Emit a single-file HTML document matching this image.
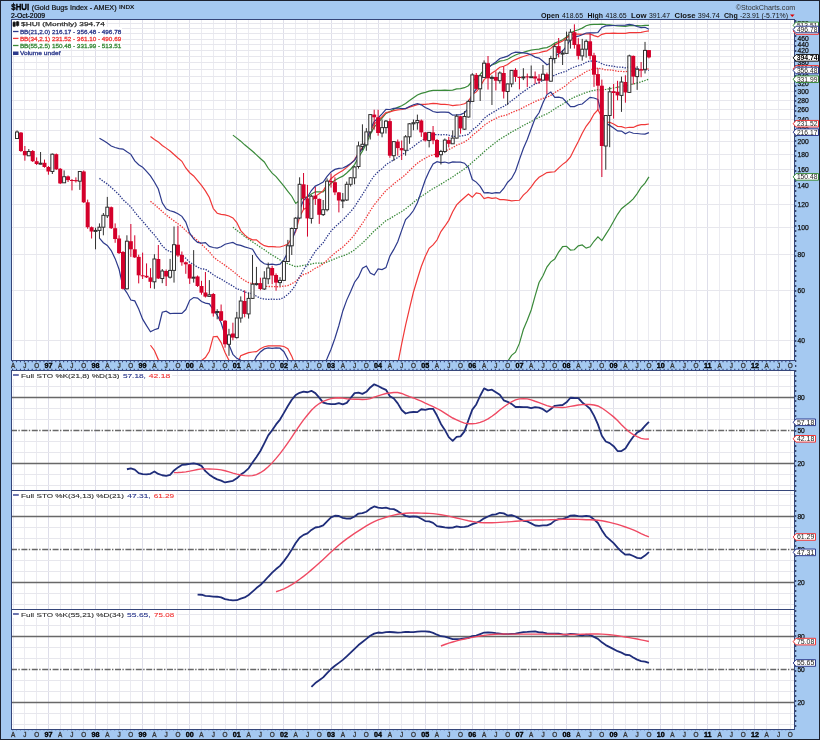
<!DOCTYPE html>
<html><head><meta charset="utf-8"><style>
html,body{margin:0;padding:0;}
body{width:820px;height:740px;position:relative;overflow:hidden;background:#a5c9f1;font-family:"Liberation Sans",sans-serif;}
</style></head><body>
<svg width="820" height="740" viewBox="0 0 820 740" style="position:absolute;left:0;top:0;will-change:transform" font-family='"Liberation Sans",sans-serif'>
<rect x="0" y="0" width="820" height="740" fill="#a5c9f1"/>
<rect x="11" y="19" width="784" height="341" fill="#fff"/>
<rect x="11" y="370" width="784" height="120" fill="#fff"/>
<rect x="11" y="490" width="784" height="119" fill="#fff"/>
<rect x="11" y="609" width="784" height="120" fill="#fff"/>
<path d="M13.5 19V360M13.5 370V490M13.5 490V609M13.5 609V729M24.5 19V360M24.5 370V490M24.5 490V609M24.5 609V729M36.5 19V360M36.5 370V490M36.5 490V609M36.5 609V729M60.5 19V360M60.5 370V490M60.5 490V609M60.5 609V729M71.5 19V360M71.5 370V490M71.5 490V609M71.5 609V729M83.5 19V360M83.5 370V490M83.5 490V609M83.5 609V729M107.5 19V360M107.5 370V490M107.5 490V609M107.5 609V729M119.5 19V360M119.5 370V490M119.5 490V609M119.5 609V729M130.5 19V360M130.5 370V490M130.5 490V609M130.5 609V729M154.5 19V360M154.5 370V490M154.5 490V609M154.5 609V729M166.5 19V360M166.5 370V490M166.5 490V609M166.5 609V729M177.5 19V360M177.5 370V490M177.5 490V609M177.5 609V729M201.5 19V360M201.5 370V490M201.5 490V609M201.5 609V729M213.5 19V360M213.5 370V490M213.5 490V609M213.5 609V729M225.5 19V360M225.5 370V490M225.5 490V609M225.5 609V729M248.5 19V360M248.5 370V490M248.5 490V609M248.5 609V729M260.5 19V360M260.5 370V490M260.5 490V609M260.5 609V729M272.5 19V360M272.5 370V490M272.5 490V609M272.5 609V729M295.5 19V360M295.5 370V490M295.5 490V609M295.5 609V729M307.5 19V360M307.5 370V490M307.5 490V609M307.5 609V729M319.5 19V360M319.5 370V490M319.5 490V609M319.5 609V729M342.5 19V360M342.5 370V490M342.5 490V609M342.5 609V729M354.5 19V360M354.5 370V490M354.5 490V609M354.5 609V729M366.5 19V360M366.5 370V490M366.5 490V609M366.5 609V729M389.5 19V360M389.5 370V490M389.5 490V609M389.5 609V729M401.5 19V360M401.5 370V490M401.5 490V609M401.5 609V729M413.5 19V360M413.5 370V490M413.5 490V609M413.5 609V729M437.5 19V360M437.5 370V490M437.5 490V609M437.5 609V729M448.5 19V360M448.5 370V490M448.5 490V609M448.5 609V729M460.5 19V360M460.5 370V490M460.5 490V609M460.5 609V729M484.5 19V360M484.5 370V490M484.5 490V609M484.5 609V729M495.5 19V360M495.5 370V490M495.5 490V609M495.5 609V729M507.5 19V360M507.5 370V490M507.5 490V609M507.5 609V729M531.5 19V360M531.5 370V490M531.5 490V609M531.5 609V729M542.5 19V360M542.5 370V490M542.5 490V609M542.5 609V729M554.5 19V360M554.5 370V490M554.5 490V609M554.5 609V729M578.5 19V360M578.5 370V490M578.5 490V609M578.5 609V729M590.5 19V360M590.5 370V490M590.5 490V609M590.5 609V729M601.5 19V360M601.5 370V490M601.5 490V609M601.5 609V729M625.5 19V360M625.5 370V490M625.5 490V609M625.5 609V729M637.5 19V360M637.5 370V490M637.5 490V609M637.5 609V729M648.5 19V360M648.5 370V490M648.5 490V609M648.5 609V729M672.5 19V360M672.5 370V490M672.5 490V609M672.5 609V729M684.5 19V360M684.5 370V490M684.5 490V609M684.5 609V729M696.5 19V360M696.5 370V490M696.5 490V609M696.5 609V729M719.5 19V360M719.5 370V490M719.5 490V609M719.5 609V729M731.5 19V360M731.5 370V490M731.5 490V609M731.5 609V729M743.5 19V360M743.5 370V490M743.5 490V609M743.5 609V729M766.5 19V360M766.5 370V490M766.5 490V609M766.5 609V729M778.5 19V360M778.5 370V490M778.5 490V609M778.5 609V729M790.5 19V360M790.5 370V490M790.5 490V609M790.5 609V729" stroke="#ebebf1" stroke-width="1" fill="none"/>
<path d="M48.5 19V360M48.5 370V490M48.5 490V609M48.5 609V729M95.5 19V360M95.5 370V490M95.5 490V609M95.5 609V729M142.5 19V360M142.5 370V490M142.5 490V609M142.5 609V729M189.5 19V360M189.5 370V490M189.5 490V609M189.5 609V729M236.5 19V360M236.5 370V490M236.5 490V609M236.5 609V729M283.5 19V360M283.5 370V490M283.5 490V609M283.5 609V729M331.5 19V360M331.5 370V490M331.5 490V609M331.5 609V729M378.5 19V360M378.5 370V490M378.5 490V609M378.5 609V729M425.5 19V360M425.5 370V490M425.5 490V609M425.5 609V729M472.5 19V360M472.5 370V490M472.5 490V609M472.5 609V729M519.5 19V360M519.5 370V490M519.5 490V609M519.5 609V729M566.5 19V360M566.5 370V490M566.5 490V609M566.5 609V729M613.5 19V360M613.5 370V490M613.5 490V609M613.5 609V729M660.5 19V360M660.5 370V490M660.5 490V609M660.5 609V729M707.5 19V360M707.5 370V490M707.5 490V609M707.5 609V729M754.5 19V360M754.5 370V490M754.5 490V609M754.5 609V729" stroke="#dedeea" stroke-width="1" fill="none"/>
<path d="M11 340.5H795M11 290.5H795M11 254.5H795M11 227.5H795M11 204.5H795M11 185.5H795M11 169.5H795M11 154.5H795M11 141.5H795M11 130.5H795M11 119.5H795M11 109.5H795M11 100.5H795M11 91.5H795M11 83.5H795M11 76.5H795M11 69.5H795M11 62.5H795M11 56.5H795M11 50.5H795M11 44.5H795M11 39.5H795M11 33.5H795M11 28.5H795M11 23.5H795M11 485.5H795M11 474.5H795M11 452.5H795M11 441.5H795M11 419.5H795M11 408.5H795M11 386.5H795M11 375.5H795M11 604.5H795M11 593.5H795M11 571.5H795M11 560.5H795M11 538.5H795M11 527.5H795M11 505.5H795M11 494.5H795M11 724.5H795M11 713.5H795M11 691.5H795M11 680.5H795M11 658.5H795M11 647.5H795M11 625.5H795M11 614.5H795" stroke="#e7e7ed" stroke-width="1" fill="none"/>
<path d="M11 397.5H795" stroke="#686868" stroke-width="1.5"/>
<path d="M11 463.5H795" stroke="#686868" stroke-width="1.5"/>
<path d="M11 430.5H795" stroke="#686868" stroke-width="1.4" stroke-dasharray="6 1.4 1.4 1.6"/>
<path d="M11 516.5H795" stroke="#686868" stroke-width="1.5"/>
<path d="M11 582.5H795" stroke="#686868" stroke-width="1.5"/>
<path d="M11 549.5H795" stroke="#686868" stroke-width="1.4" stroke-dasharray="6 1.4 1.4 1.6"/>
<path d="M11 636.5H795" stroke="#686868" stroke-width="1.5"/>
<path d="M11 702.5H795" stroke="#686868" stroke-width="1.5"/>
<path d="M11 669.5H795" stroke="#686868" stroke-width="1.4" stroke-dasharray="6 1.4 1.4 1.6"/>
<clipPath id="cm"><rect x="11" y="19" width="784" height="341"/></clipPath>
<g clip-path="url(#cm)">
<path d="M232.90 135.14 L236.82 138.14 L240.75 141.16 L244.67 144.82 L248.60 147.96 L252.52 151.20 L256.45 154.85 L260.38 158.44 L264.30 161.93 L268.23 168.27 L272.15 173.08 L276.07 176.61 L280.00 181.41 L283.93 186.22 L287.85 191.26 L291.78 196.21 L295.70 203.45 L299.62 200.49 L303.55 197.78 L307.48 196.96 L311.40 194.04 L315.32 191.78 L319.25 191.74 L323.18 191.96 L327.10 187.47 L331.03 183.21 L334.95 180.20 L338.88 177.99 L342.80 176.15 L346.73 172.93 L350.65 169.22 L354.57 164.57 L358.50 157.45 L362.43 151.10 L366.35 143.69 L370.28 134.36 L374.20 127.04 L378.12 122.66 L382.05 118.15 L385.98 113.39 L389.90 111.67 L393.82 109.23 L397.75 107.35 L401.68 105.72 L405.60 103.48 L409.52 100.49 L413.45 97.71 L417.38 95.04 L421.30 93.41 L425.23 92.31 L429.15 91.06 L433.07 90.32 L437.00 90.31 L440.93 90.42 L444.85 90.21 L448.77 90.31 L452.70 90.18 L456.62 88.87 L460.55 88.61 L464.48 87.70 L468.40 85.66 L472.32 80.80 L476.25 78.34 L480.18 74.62 L484.10 69.57 L488.02 67.09 L491.95 64.94 L495.88 63.38 L499.80 61.16 L503.73 60.48 L507.65 59.23 L511.57 56.94 L515.50 55.02 L519.42 53.52 L523.35 52.40 L527.27 51.16 L531.20 50.08 L535.12 49.52 L539.05 49.17 L542.98 48.12 L546.90 47.59 L550.83 45.79 L554.75 43.13 L558.67 41.51 L562.60 39.85 L566.52 36.95 L570.45 33.23 L574.38 31.02 L578.30 29.81 L582.23 28.11 L586.15 25.78 L590.08 24.64 L594.00 24.45 L597.92 24.45 L601.85 24.15 L605.77 24.65 L609.70 24.95 L613.62 25.40 L617.55 25.95 L621.48 26.17 L625.40 26.34 L629.33 25.58 L633.25 25.56 L637.17 25.61 L641.10 25.91 L645.02 25.29 L648.95 25.34" stroke="#3a8a3a" stroke-width="1.2" fill="none"/>
<path d="M232.90 795.59 L236.82 795.59 L240.75 795.59 L244.67 795.59 L248.60 795.59 L252.52 795.59 L256.45 795.59 L260.38 795.59 L264.30 795.59 L268.23 737.30 L272.15 612.38 L276.07 576.20 L280.00 530.78 L283.93 493.92 L287.85 461.91 L291.78 435.41 L295.70 403.15 L299.62 415.22 L303.55 425.87 L307.48 428.70 L311.40 441.53 L315.32 452.41 L319.25 452.59 L323.18 451.46 L327.10 479.00 L331.03 510.39 L334.95 532.46 L338.88 537.57 L342.80 552.86 L346.73 590.82 L350.65 656.39 L354.57 795.59 L358.50 795.59 L362.43 795.59 L366.35 795.59 L370.28 795.59 L374.20 795.59 L378.12 795.59 L382.05 795.59 L385.98 795.59 L389.90 795.59 L393.82 795.59 L397.75 795.59 L401.68 795.59 L405.60 795.59 L409.52 795.59 L413.45 795.59 L417.38 795.59 L421.30 795.59 L425.23 795.59 L429.15 795.59 L433.07 795.59 L437.00 795.59 L440.93 795.59 L444.85 795.59 L448.77 795.59 L452.70 795.59 L456.62 795.59 L460.55 564.52 L464.48 498.67 L468.40 472.32 L472.32 496.65 L476.25 473.17 L480.18 475.24 L484.10 509.73 L488.02 483.30 L491.95 453.13 L495.88 420.70 L499.80 403.63 L503.73 377.52 L507.65 361.47 L511.57 355.33 L515.50 352.14 L519.42 343.41 L523.35 329.54 L527.27 320.20 L531.20 309.97 L535.12 295.85 L539.05 282.51 L542.98 275.68 L546.90 267.11 L550.83 261.87 L554.75 259.08 L558.67 252.08 L562.60 246.65 L566.52 246.27 L570.45 250.02 L574.38 249.75 L578.30 245.92 L582.23 245.01 L586.15 248.19 L590.08 246.80 L594.00 241.27 L597.92 236.77 L601.85 240.63 L605.77 234.43 L609.70 228.24 L613.62 221.27 L617.55 214.31 L621.48 208.70 L625.40 205.43 L629.33 202.44 L633.25 198.83 L637.17 193.62 L641.10 187.29 L645.02 183.05 L648.95 176.93" stroke="#3a8a3a" stroke-width="1.2" fill="none"/>
<path d="M232.90 227.22 L236.82 230.35 L240.75 233.23 L244.67 236.46 L248.60 239.26 L252.52 241.86 L256.45 244.53 L260.38 247.20 L264.30 249.62 L268.23 252.59 L272.15 255.16 L276.07 257.40 L280.00 259.87 L283.93 261.96 L287.85 263.74 L291.78 265.15 L295.70 266.67 L299.62 266.07 L303.55 265.27 L307.48 264.94 L311.40 263.99 L315.32 263.22 L319.25 263.20 L323.18 263.28 L327.10 261.90 L331.03 260.33 L334.95 258.83 L338.88 257.00 L342.80 255.99 L346.73 254.36 L350.65 252.39 L354.57 249.80 L358.50 246.46 L362.43 243.11 L366.35 239.29 L370.28 235.11 L374.20 230.93 L378.12 227.63 L382.05 224.15 L385.98 220.57 L389.90 218.64 L393.82 216.14 L397.75 213.81 L401.68 211.57 L405.60 208.79 L409.52 205.65 L413.45 202.47 L417.38 199.23 L421.30 196.43 L425.23 193.93 L429.15 191.12 L433.07 188.61 L437.00 186.51 L440.93 184.17 L444.85 181.65 L448.77 179.26 L452.70 176.88 L456.62 174.07 L460.55 171.57 L464.48 168.89 L468.40 165.93 L472.32 162.16 L476.25 158.95 L480.18 155.45 L484.10 151.67 L488.02 148.47 L491.95 145.28 L495.88 142.28 L499.80 139.23 L503.73 136.90 L507.65 134.55 L511.57 131.94 L515.50 129.92 L519.42 127.81 L523.35 125.52 L527.27 123.49 L531.20 121.44 L535.12 119.34 L539.05 117.36 L542.98 115.53 L546.90 113.87 L550.83 111.57 L554.75 108.89 L558.67 106.46 L562.60 104.22 L566.52 101.71 L570.45 99.12 L574.38 97.19 L578.30 95.59 L582.23 94.01 L586.15 92.48 L590.08 91.30 L594.00 90.34 L597.92 89.67 L601.85 89.99 L605.77 89.48 L609.70 88.75 L613.62 87.97 L617.55 87.22 L621.48 86.38 L625.40 85.90 L629.33 84.71 L633.25 84.00 L637.17 82.99 L641.10 81.91 L645.02 80.51 L648.95 79.19" stroke="#3a8a3a" stroke-width="1.3" stroke-dasharray="1.4 1.3" fill="none"/>
<path d="M150.47 136.59 L154.40 139.45 L158.32 141.92 L162.25 145.42 L166.17 148.13 L170.10 151.00 L174.02 154.56 L177.95 158.02 L181.88 161.28 L185.80 167.97 L189.72 172.70 L193.65 175.97 L197.57 180.67 L201.50 185.46 L205.42 190.93 L209.35 197.48 L213.27 208.53 L217.20 213.23 L221.12 214.44 L225.05 214.83 L228.97 216.03 L232.90 217.91 L236.82 222.58 L240.75 230.54 L244.67 234.85 L248.60 238.14 L252.52 239.85 L256.45 239.77 L260.38 243.30 L264.30 245.67 L268.23 246.61 L272.15 246.62 L276.07 246.87 L280.00 246.99 L283.93 245.77 L287.85 244.12 L291.78 238.38 L295.70 231.62 L299.62 216.82 L303.55 209.49 L307.48 207.16 L311.40 201.27 L315.32 196.36 L319.25 193.77 L323.18 190.71 L327.10 184.19 L331.03 178.73 L334.95 175.20 L338.88 172.79 L342.80 170.58 L346.73 167.35 L350.65 163.83 L354.57 159.59 L358.50 153.08 L362.43 147.33 L366.35 140.47 L370.28 131.20 L374.20 124.08 L378.12 120.53 L382.05 116.73 L385.98 112.53 L389.90 111.84 L393.82 110.60 L397.75 109.94 L401.68 109.50 L405.60 108.60 L409.52 107.08 L413.45 105.90 L417.38 104.56 L421.30 104.27 L425.23 104.32 L429.15 103.87 L433.07 103.33 L437.00 103.60 L440.93 104.42 L444.85 104.40 L448.77 104.73 L452.70 105.65 L456.62 105.10 L460.55 104.78 L464.48 103.71 L468.40 101.44 L472.32 94.43 L476.25 91.89 L480.18 86.79 L484.10 79.66 L488.02 76.41 L491.95 73.08 L495.88 70.53 L499.80 67.23 L503.73 66.21 L507.65 64.57 L511.57 61.59 L515.50 59.58 L519.42 57.83 L523.35 56.54 L527.27 55.21 L531.20 54.15 L535.12 53.47 L539.05 52.79 L542.98 51.58 L546.90 50.88 L550.83 48.39 L554.75 44.85 L558.67 42.86 L562.60 40.98 L566.52 38.01 L570.45 34.93 L574.38 34.06 L578.30 34.18 L582.23 34.29 L586.15 33.76 L590.08 33.92 L594.00 35.67 L597.92 36.94 L601.85 34.31 L605.77 33.33 L609.70 33.28 L613.62 33.16 L617.55 33.34 L621.48 33.35 L625.40 33.29 L629.33 32.54 L633.25 32.59 L637.17 32.53 L641.10 32.42 L645.02 31.48 L648.95 30.94" stroke="#f03838" stroke-width="1.2" fill="none"/>
<path d="M150.47 345.25 L154.40 350.47 L158.32 359.59 L162.25 363.81 L166.17 371.07 L170.10 376.35 L174.02 374.31 L177.95 374.03 L181.88 375.01 L185.80 364.33 L189.72 362.28 L193.65 363.72 L197.57 362.03 L201.50 360.60 L205.42 357.49 L209.35 351.28 L213.27 336.70 L217.20 336.35 L221.12 342.57 L225.05 352.57 L228.97 360.32 L232.90 367.14 L236.82 365.79 L240.75 355.60 L244.67 354.15 L248.60 352.67 L252.52 352.01 L256.45 351.69 L260.38 348.80 L264.30 346.70 L268.23 345.82 L272.15 345.82 L276.07 345.91 L280.00 345.95 L283.93 346.51 L287.85 348.62 L291.78 356.14 L295.70 366.90 L299.62 401.66 L303.55 420.10 L307.48 426.05 L311.40 445.16 L315.32 460.83 L319.25 465.65 L323.18 469.05 L327.10 494.94 L331.03 513.46 L334.95 512.98 L338.88 501.63 L342.80 489.53 L346.73 477.57 L350.65 467.64 L354.57 459.34 L358.50 461.72 L362.43 458.72 L366.35 463.56 L370.28 501.85 L374.20 524.73 L378.12 489.40 L382.05 466.38 L385.98 452.35 L389.90 416.98 L393.82 388.26 L397.75 363.99 L401.68 343.96 L405.60 325.21 L409.52 308.40 L413.45 292.01 L417.38 278.98 L421.30 266.50 L425.23 256.47 L429.15 248.35 L433.07 244.93 L437.00 240.00 L440.93 231.59 L444.85 226.21 L448.77 220.36 L452.70 211.79 L456.62 204.90 L460.55 201.01 L464.48 197.45 L468.40 194.15 L472.32 197.30 L476.25 192.92 L480.18 193.74 L484.10 198.67 L488.02 197.45 L491.95 198.27 L495.88 197.78 L499.80 199.60 L503.73 199.66 L507.65 200.10 L511.57 200.89 L515.50 200.50 L519.42 200.25 L523.35 195.16 L527.27 191.66 L531.20 186.89 L535.12 181.29 L539.05 177.28 L542.98 175.11 L546.90 172.53 L550.83 172.05 L554.75 171.78 L558.67 167.83 L562.60 164.37 L566.52 161.51 L570.45 156.91 L574.38 149.10 L578.30 141.42 L582.23 133.22 L586.15 126.29 L590.08 121.10 L594.00 114.06 L597.92 109.73 L601.85 117.09 L605.77 121.98 L609.70 122.30 L613.62 123.93 L617.55 126.31 L621.48 126.60 L625.40 127.98 L629.33 127.24 L633.25 127.46 L637.17 125.68 L641.10 124.69 L645.02 124.71 L648.95 124.02" stroke="#f03838" stroke-width="1.2" fill="none"/>
<path d="M150.47 201.25 L154.40 204.47 L158.32 207.93 L162.25 211.54 L166.17 214.90 L170.10 218.11 L174.02 220.88 L177.95 223.79 L181.88 226.71 L185.80 230.63 L189.72 234.18 L193.65 237.13 L197.57 240.66 L201.50 244.26 L205.42 248.02 L209.35 251.83 L213.27 256.68 L217.20 260.03 L221.12 262.57 L225.05 265.40 L228.97 268.19 L232.90 271.22 L236.82 274.48 L240.75 277.86 L244.67 280.61 L248.60 282.57 L252.52 283.60 L256.45 283.45 L260.38 285.10 L264.30 286.12 L268.23 286.50 L272.15 286.50 L276.07 286.71 L280.00 286.80 L283.93 286.13 L287.85 285.62 L291.78 283.72 L295.70 281.59 L299.62 277.45 L303.55 274.45 L307.48 273.35 L311.40 270.79 L315.32 268.21 L319.25 266.37 L323.18 263.94 L327.10 260.16 L331.03 256.34 L334.95 252.99 L338.88 250.02 L342.80 247.14 L346.73 243.28 L350.65 239.26 L354.57 234.71 L358.50 228.89 L362.43 223.35 L366.35 217.32 L370.28 210.76 L374.20 204.91 L378.12 200.00 L382.05 195.21 L385.98 190.45 L389.90 187.38 L393.82 183.77 L397.75 180.65 L401.68 177.83 L405.60 174.46 L409.52 170.56 L413.45 166.76 L417.38 163.22 L421.30 160.45 L425.23 158.29 L429.15 156.07 L433.07 154.85 L437.00 153.84 L440.93 152.30 L444.85 150.85 L448.77 149.47 L452.70 147.64 L456.62 145.18 L460.55 143.74 L464.48 141.89 L468.40 139.29 L472.32 135.44 L476.25 132.34 L480.18 129.03 L484.10 125.34 L488.02 122.65 L491.95 120.43 L495.88 118.43 L499.80 116.46 L503.73 115.71 L507.65 114.60 L511.57 112.55 L515.50 110.93 L519.42 109.54 L523.35 107.33 L527.27 105.46 L531.20 103.47 L535.12 101.52 L539.05 99.96 L542.98 98.49 L546.90 97.29 L550.83 95.34 L554.75 92.67 L558.67 90.16 L562.60 87.86 L566.52 84.92 L570.45 81.42 L574.38 78.64 L578.30 76.50 L582.23 74.10 L586.15 71.55 L590.08 69.97 L594.00 68.74 L597.92 68.04 L601.85 68.89 L605.77 69.86 L609.70 69.93 L613.62 70.38 L617.55 71.27 L621.48 71.37 L625.40 71.77 L629.33 71.02 L633.25 71.12 L637.17 70.51 L641.10 70.12 L645.02 69.49 L648.95 68.91" stroke="#f03838" stroke-width="1.3" stroke-dasharray="1.4 1.3" fill="none"/>
<path d="M99.45 138.27 L103.37 140.60 L107.30 143.03 L111.22 145.96 L115.15 147.49 L119.07 148.65 L123.00 149.12 L126.92 151.86 L130.85 154.32 L134.78 160.92 L138.70 164.79 L142.62 167.12 L146.55 171.40 L150.47 175.94 L154.40 181.96 L158.32 189.00 L162.25 202.82 L166.17 208.75 L170.10 210.73 L174.02 211.86 L177.95 213.68 L181.88 216.31 L185.80 222.11 L189.72 233.14 L193.65 238.91 L197.57 242.34 L201.50 243.13 L205.42 242.65 L209.35 246.40 L213.27 247.49 L217.20 248.09 L221.12 246.77 L225.05 244.29 L228.97 243.26 L232.90 242.36 L236.82 244.70 L240.75 245.45 L244.67 246.90 L248.60 247.97 L252.52 249.17 L256.45 255.79 L260.38 260.85 L264.30 263.72 L268.23 264.54 L272.15 264.10 L276.07 264.80 L280.00 264.18 L283.93 259.83 L287.85 252.11 L291.78 241.03 L295.70 229.64 L299.62 209.62 L303.55 200.32 L307.48 196.98 L311.40 190.54 L315.32 186.11 L319.25 184.33 L323.18 182.13 L327.10 176.44 L331.03 171.87 L334.95 169.42 L338.88 168.39 L342.80 168.02 L346.73 166.11 L350.65 163.57 L354.57 160.38 L358.50 153.74 L362.43 148.69 L366.35 141.01 L370.28 129.54 L374.20 121.50 L378.12 118.02 L382.05 113.88 L385.98 109.37 L389.90 109.49 L393.82 108.36 L397.75 108.00 L401.68 108.64 L405.60 108.65 L409.52 106.50 L413.45 104.69 L417.38 103.57 L421.30 104.85 L425.23 107.45 L429.15 109.21 L433.07 111.47 L437.00 112.37 L440.93 112.14 L444.85 112.17 L448.77 112.42 L452.70 115.18 L456.62 114.94 L460.55 114.56 L464.48 112.87 L468.40 108.25 L472.32 94.54 L476.25 89.10 L480.18 81.55 L484.10 72.29 L488.02 68.24 L491.95 64.62 L495.88 61.91 L499.80 58.44 L503.73 57.43 L507.65 56.15 L511.57 53.43 L515.50 52.21 L519.42 52.37 L523.35 52.84 L527.27 53.33 L531.20 54.85 L535.12 57.10 L539.05 58.14 L542.98 61.26 L546.90 64.79 L550.83 63.14 L554.75 56.50 L558.67 53.63 L562.60 51.02 L566.52 46.16 L570.45 39.44 L574.38 36.95 L578.30 36.19 L582.23 34.74 L586.15 33.00 L590.08 32.91 L594.00 32.85 L597.92 32.49 L601.85 27.41 L605.77 25.91 L609.70 25.70 L613.62 25.49 L617.55 25.24 L621.48 25.24 L625.40 25.16 L629.33 24.35 L633.25 24.96 L637.17 26.53 L641.10 27.54 L645.02 27.27 L648.95 29.29" stroke="#2d3a8c" stroke-width="1.2" fill="none"/>
<path d="M99.45 238.19 L103.37 242.76 L107.30 245.48 L111.22 250.59 L115.15 258.64 L119.07 269.25 L123.00 286.96 L126.92 292.83 L130.85 300.09 L134.78 300.88 L138.70 308.99 L142.62 319.12 L146.55 325.68 L150.47 331.73 L154.40 329.72 L158.32 328.42 L162.25 312.25 L166.17 311.17 L170.10 313.54 L174.02 313.26 L177.95 313.38 L181.88 313.40 L185.80 309.55 L189.72 300.28 L193.65 297.52 L197.57 298.05 L201.50 301.51 L205.42 303.10 L209.35 303.91 L213.27 309.72 L217.20 315.23 L221.12 322.73 L225.05 335.28 L228.97 344.81 L232.90 354.35 L236.82 358.34 L240.75 360.20 L244.67 363.71 L248.60 364.85 L252.52 364.46 L256.45 356.69 L260.38 351.90 L264.30 348.92 L268.23 347.98 L272.15 348.34 L276.07 347.86 L280.00 348.18 L283.93 351.68 L287.85 359.33 L291.78 373.68 L295.70 387.06 L299.62 433.55 L303.55 443.55 L307.48 423.07 L311.40 414.75 L315.32 398.06 L319.25 380.05 L323.18 367.15 L327.10 358.55 L331.03 349.32 L334.95 338.29 L338.88 325.46 L342.80 310.95 L346.73 300.11 L350.65 291.58 L354.57 282.21 L358.50 276.88 L362.43 268.20 L366.35 266.02 L370.28 273.07 L374.20 275.00 L378.12 268.88 L382.05 269.57 L385.98 267.59 L389.90 256.12 L393.82 249.40 L397.75 241.77 L401.68 230.38 L405.60 219.65 L409.52 215.55 L413.45 210.53 L417.38 202.68 L421.30 191.54 L425.23 180.09 L429.15 171.32 L433.07 163.91 L437.00 161.61 L440.93 162.55 L444.85 162.04 L448.77 163.04 L452.70 161.95 L456.62 162.15 L460.55 162.14 L464.48 163.19 L468.40 167.47 L472.32 179.53 L476.25 182.11 L480.18 186.40 L484.10 192.90 L488.02 192.62 L491.95 193.33 L495.88 192.65 L499.80 192.90 L503.73 188.47 L507.65 182.25 L511.57 178.47 L515.50 171.30 L519.42 159.58 L523.35 148.56 L527.27 139.50 L531.20 128.75 L535.12 118.37 L539.05 112.81 L542.98 102.72 L546.90 94.59 L550.83 92.11 L554.75 97.37 L558.67 97.17 L562.60 98.11 L566.52 102.23 L570.45 106.71 L574.38 106.57 L578.30 104.72 L582.23 104.01 L586.15 100.59 L590.08 97.37 L594.00 97.97 L597.92 99.55 L601.85 115.39 L605.77 123.01 L609.70 125.38 L613.62 128.03 L617.55 130.87 L621.48 131.06 L625.40 133.84 L629.33 131.79 L633.25 133.26 L637.17 133.48 L641.10 133.99 L645.02 134.12 L648.95 132.65" stroke="#2d3a8c" stroke-width="1.2" fill="none"/>
<path d="M99.45 178.38 L103.37 181.40 L107.30 183.91 L111.22 187.50 L115.15 190.95 L119.07 194.77 L123.00 199.71 L126.92 203.22 L130.85 206.83 L134.78 212.04 L138.70 216.92 L142.62 221.06 L146.55 225.85 L150.47 230.73 L154.40 234.93 L158.32 239.99 L162.25 245.79 L166.17 249.62 L170.10 251.72 L174.02 252.43 L177.95 253.73 L181.88 255.54 L185.80 258.24 L189.72 262.20 L193.65 264.77 L197.57 267.08 L201.50 268.90 L205.42 269.21 L209.35 271.83 L213.27 274.72 L217.20 277.15 L221.12 279.00 L225.05 281.58 L228.97 283.87 L232.90 286.06 L236.82 288.88 L240.75 289.95 L244.67 291.97 L248.60 293.06 L252.52 293.81 L256.45 296.20 L260.38 298.16 L264.30 299.11 L268.23 299.34 L272.15 299.17 L276.07 299.47 L280.00 299.17 L283.93 297.40 L287.85 294.42 L291.78 290.32 L295.70 284.78 L299.62 276.53 L303.55 269.76 L307.48 264.19 L311.40 257.49 L315.32 251.28 L319.25 246.88 L323.18 242.80 L327.10 236.57 L331.03 231.12 L334.95 226.97 L338.88 223.46 L342.80 219.86 L346.73 215.75 L350.65 211.67 L354.57 206.83 L358.50 200.55 L362.43 194.51 L366.35 188.32 L370.28 181.52 L374.20 175.78 L378.12 171.70 L382.05 168.65 L385.98 164.69 L389.90 162.20 L393.82 159.74 L397.75 157.58 L401.68 155.07 L405.60 152.07 L409.52 149.35 L413.45 146.59 L417.38 143.43 L421.30 140.73 L425.23 138.50 L429.15 136.40 L433.07 134.92 L437.00 134.55 L440.93 134.79 L444.85 134.60 L448.77 135.15 L452.70 136.36 L456.62 136.30 L460.55 136.07 L464.48 135.48 L468.40 134.34 L472.32 129.86 L476.25 127.04 L480.18 123.16 L484.10 118.41 L488.02 115.38 L491.95 112.90 L495.88 110.72 L499.80 108.20 L503.73 106.32 L507.65 103.75 L511.57 100.75 L515.50 97.91 L519.42 94.68 L523.35 91.64 L527.27 89.04 L531.20 86.35 L535.12 83.97 L539.05 82.47 L542.98 80.26 L546.90 78.79 L550.83 76.78 L554.75 75.25 L558.67 73.49 L562.60 72.33 L566.52 71.03 L570.45 68.55 L574.38 66.92 L578.30 65.75 L582.23 64.58 L586.15 62.23 L590.08 60.98 L594.00 61.17 L597.92 61.52 L601.85 63.72 L605.77 65.15 L609.70 65.73 L613.62 66.40 L617.55 67.08 L621.48 67.14 L625.40 67.90 L629.33 66.73 L633.25 67.59 L637.17 68.77 L641.10 69.62 L645.02 69.47 L648.95 70.45" stroke="#2d3a8c" stroke-width="1.3" stroke-dasharray="1.4 1.3" fill="none"/>
<path d="M17.02 130.40V139.00" stroke="#303030" stroke-width="1"/>
<rect x="15.52" y="132.00" width="3" height="6.50" fill="#fff" stroke="#303030" stroke-width="1"/>
<path d="M20.95 132.00V152.00" stroke="#d4002b" stroke-width="1"/>
<rect x="18.95" y="132.60" width="4" height="18.40" fill="#d4002b"/>
<path d="M24.88 146.00V160.70" stroke="#d4002b" stroke-width="1"/>
<rect x="22.88" y="151.00" width="4" height="4.30" fill="#d4002b"/>
<path d="M28.80 149.00V156.00" stroke="#303030" stroke-width="1"/>
<rect x="27.30" y="151.50" width="3" height="4.30" fill="#fff" stroke="#303030" stroke-width="1"/>
<path d="M32.73 150.00V162.00" stroke="#d4002b" stroke-width="1"/>
<rect x="30.73" y="151.00" width="4" height="10.20" fill="#d4002b"/>
<path d="M36.65 157.40V165.00" stroke="#d4002b" stroke-width="1"/>
<rect x="34.65" y="161.20" width="4" height="2.80" fill="#d4002b"/>
<path d="M40.57 152.00V164.50" stroke="#303030" stroke-width="1"/>
<rect x="39.07" y="163.20" width="3" height="1.00" fill="#fff" stroke="#303030" stroke-width="1"/>
<path d="M44.50 159.60V167.70" stroke="#d4002b" stroke-width="1"/>
<rect x="42.50" y="162.80" width="4" height="4.20" fill="#d4002b"/>
<path d="M48.42 166.00V174.70" stroke="#d4002b" stroke-width="1"/>
<rect x="46.42" y="167.00" width="4" height="4.50" fill="#d4002b"/>
<path d="M52.35 153.50V174.00" stroke="#303030" stroke-width="1"/>
<rect x="50.85" y="154.20" width="3" height="17.30" fill="#fff" stroke="#303030" stroke-width="1"/>
<path d="M56.27 153.50V170.00" stroke="#d4002b" stroke-width="1"/>
<rect x="54.27" y="154.20" width="4" height="15.10" fill="#d4002b"/>
<path d="M60.20 168.00V184.00" stroke="#d4002b" stroke-width="1"/>
<rect x="58.20" y="168.80" width="4" height="14.60" fill="#d4002b"/>
<path d="M64.12 170.40V183.00" stroke="#303030" stroke-width="1"/>
<rect x="62.62" y="176.70" width="3" height="6.10" fill="#fff" stroke="#303030" stroke-width="1"/>
<path d="M68.05 175.50V182.00" stroke="#d4002b" stroke-width="1"/>
<rect x="66.05" y="176.40" width="4" height="3.70" fill="#d4002b"/>
<path d="M71.97 179.00V190.40" stroke="#d4002b" stroke-width="1"/>
<rect x="69.97" y="180.00" width="4" height="1.00" fill="#d4002b"/>
<path d="M75.90 177.40V182.50" stroke="#d4002b" stroke-width="1"/>
<rect x="73.90" y="180.10" width="4" height="1.10" fill="#d4002b"/>
<path d="M79.82 171.00V189.90" stroke="#303030" stroke-width="1"/>
<rect x="78.32" y="171.50" width="3" height="9.70" fill="#fff" stroke="#303030" stroke-width="1"/>
<path d="M83.75 170.50V203.00" stroke="#d4002b" stroke-width="1"/>
<rect x="81.75" y="171.50" width="4" height="30.80" fill="#d4002b"/>
<path d="M87.67 199.60V228.80" stroke="#d4002b" stroke-width="1"/>
<rect x="85.67" y="202.30" width="4" height="24.90" fill="#d4002b"/>
<path d="M91.60 226.50V238.50" stroke="#d4002b" stroke-width="1"/>
<rect x="89.60" y="227.20" width="4" height="4.30" fill="#d4002b"/>
<path d="M95.52 227.70V249.30" stroke="#303030" stroke-width="1"/>
<rect x="94.02" y="230.40" width="3" height="1.00" fill="#fff" stroke="#303030" stroke-width="1"/>
<path d="M99.45 223.40V238.50" stroke="#303030" stroke-width="1"/>
<rect x="97.95" y="227.20" width="3" height="3.20" fill="#fff" stroke="#303030" stroke-width="1"/>
<path d="M103.37 213.00V235.30" stroke="#303030" stroke-width="1"/>
<rect x="101.87" y="215.30" width="3" height="11.90" fill="#fff" stroke="#303030" stroke-width="1"/>
<path d="M107.30 196.90V218.00" stroke="#303030" stroke-width="1"/>
<rect x="105.80" y="207.20" width="3" height="8.60" fill="#fff" stroke="#303030" stroke-width="1"/>
<path d="M111.22 206.50V229.00" stroke="#d4002b" stroke-width="1"/>
<rect x="109.22" y="207.20" width="4" height="21.00" fill="#d4002b"/>
<path d="M115.15 223.40V242.80" stroke="#d4002b" stroke-width="1"/>
<rect x="113.15" y="228.20" width="4" height="10.80" fill="#d4002b"/>
<path d="M119.07 235.30V254.00" stroke="#d4002b" stroke-width="1"/>
<rect x="117.07" y="238.50" width="4" height="14.60" fill="#d4002b"/>
<path d="M123.00 251.00V289.50" stroke="#d4002b" stroke-width="1"/>
<rect x="121.00" y="252.00" width="4" height="36.80" fill="#d4002b"/>
<path d="M126.92 235.30V289.50" stroke="#303030" stroke-width="1"/>
<rect x="125.42" y="241.20" width="3" height="47.60" fill="#fff" stroke="#303030" stroke-width="1"/>
<path d="M130.85 224.00V256.90" stroke="#d4002b" stroke-width="1"/>
<rect x="128.85" y="241.20" width="4" height="8.10" fill="#d4002b"/>
<path d="M134.78 235.30V258.00" stroke="#d4002b" stroke-width="1"/>
<rect x="132.78" y="249.30" width="4" height="8.10" fill="#d4002b"/>
<path d="M138.70 254.70V283.40" stroke="#d4002b" stroke-width="1"/>
<rect x="136.70" y="256.90" width="4" height="18.40" fill="#d4002b"/>
<path d="M142.62 252.60V279.00" stroke="#d4002b" stroke-width="1"/>
<rect x="140.62" y="275.30" width="4" height="1.00" fill="#d4002b"/>
<path d="M146.55 263.40V278.00" stroke="#d4002b" stroke-width="1"/>
<rect x="144.55" y="275.80" width="4" height="1.60" fill="#d4002b"/>
<path d="M150.47 268.20V288.20" stroke="#d4002b" stroke-width="1"/>
<rect x="148.47" y="277.40" width="4" height="4.40" fill="#d4002b"/>
<path d="M154.40 254.20V288.80" stroke="#303030" stroke-width="1"/>
<rect x="152.90" y="259.00" width="3" height="22.80" fill="#fff" stroke="#303030" stroke-width="1"/>
<path d="M158.32 245.00V279.00" stroke="#d4002b" stroke-width="1"/>
<rect x="156.32" y="259.00" width="4" height="19.50" fill="#d4002b"/>
<path d="M162.25 269.00V283.20" stroke="#303030" stroke-width="1"/>
<rect x="160.75" y="271.00" width="3" height="7.50" fill="#fff" stroke="#303030" stroke-width="1"/>
<path d="M166.17 269.50V286.00" stroke="#d4002b" stroke-width="1"/>
<rect x="164.17" y="271.00" width="4" height="5.50" fill="#d4002b"/>
<path d="M170.10 258.90V278.50" stroke="#303030" stroke-width="1"/>
<rect x="168.60" y="270.40" width="3" height="6.80" fill="#fff" stroke="#303030" stroke-width="1"/>
<path d="M174.02 226.50V282.60" stroke="#303030" stroke-width="1"/>
<rect x="172.52" y="244.70" width="3" height="25.70" fill="#fff" stroke="#303030" stroke-width="1"/>
<path d="M177.95 225.80V256.90" stroke="#d4002b" stroke-width="1"/>
<rect x="175.95" y="244.70" width="4" height="10.80" fill="#d4002b"/>
<path d="M181.88 251.50V265.70" stroke="#d4002b" stroke-width="1"/>
<rect x="179.88" y="254.90" width="4" height="7.40" fill="#d4002b"/>
<path d="M185.80 261.50V273.80" stroke="#d4002b" stroke-width="1"/>
<rect x="183.80" y="262.30" width="4" height="2.00" fill="#d4002b"/>
<path d="M189.72 264.00V283.90" stroke="#d4002b" stroke-width="1"/>
<rect x="187.72" y="264.30" width="4" height="14.20" fill="#d4002b"/>
<path d="M193.65 250.10V282.60" stroke="#303030" stroke-width="1"/>
<rect x="192.15" y="277.20" width="3" height="1.00" fill="#fff" stroke="#303030" stroke-width="1"/>
<path d="M197.57 275.50V287.00" stroke="#d4002b" stroke-width="1"/>
<rect x="195.57" y="276.50" width="4" height="9.50" fill="#d4002b"/>
<path d="M201.50 280.80V294.70" stroke="#d4002b" stroke-width="1"/>
<rect x="199.50" y="286.00" width="4" height="6.70" fill="#d4002b"/>
<path d="M205.42 272.00V297.50" stroke="#d4002b" stroke-width="1"/>
<rect x="203.42" y="292.50" width="4" height="4.10" fill="#d4002b"/>
<path d="M209.35 280.10V297.00" stroke="#303030" stroke-width="1"/>
<rect x="207.85" y="294.80" width="3" height="1.60" fill="#fff" stroke="#303030" stroke-width="1"/>
<path d="M213.27 293.00V316.60" stroke="#d4002b" stroke-width="1"/>
<rect x="211.27" y="294.00" width="4" height="19.40" fill="#d4002b"/>
<path d="M217.20 309.20V319.30" stroke="#303030" stroke-width="1"/>
<rect x="215.70" y="311.50" width="3" height="1.00" fill="#fff" stroke="#303030" stroke-width="1"/>
<path d="M221.12 304.50V321.00" stroke="#d4002b" stroke-width="1"/>
<rect x="219.12" y="311.20" width="4" height="9.50" fill="#d4002b"/>
<path d="M225.05 320.00V347.70" stroke="#d4002b" stroke-width="1"/>
<rect x="223.05" y="320.70" width="4" height="23.60" fill="#d4002b"/>
<path d="M228.97 328.80V355.80" stroke="#303030" stroke-width="1"/>
<rect x="227.47" y="334.90" width="3" height="9.40" fill="#fff" stroke="#303030" stroke-width="1"/>
<path d="M232.90 322.70V340.30" stroke="#d4002b" stroke-width="1"/>
<rect x="230.90" y="333.50" width="4" height="4.10" fill="#d4002b"/>
<path d="M236.82 311.90V338.50" stroke="#303030" stroke-width="1"/>
<rect x="235.32" y="318.00" width="3" height="19.60" fill="#fff" stroke="#303030" stroke-width="1"/>
<path d="M240.75 296.40V322.70" stroke="#303030" stroke-width="1"/>
<rect x="239.25" y="301.00" width="3" height="17.00" fill="#fff" stroke="#303030" stroke-width="1"/>
<path d="M244.67 290.30V317.30" stroke="#d4002b" stroke-width="1"/>
<rect x="242.67" y="301.00" width="4" height="12.90" fill="#d4002b"/>
<path d="M248.60 292.70V318.60" stroke="#303030" stroke-width="1"/>
<rect x="247.10" y="298.40" width="3" height="15.50" fill="#fff" stroke="#303030" stroke-width="1"/>
<path d="M252.52 255.00V299.00" stroke="#303030" stroke-width="1"/>
<rect x="251.02" y="284.20" width="3" height="14.20" fill="#fff" stroke="#303030" stroke-width="1"/>
<path d="M256.45 266.90V285.50" stroke="#303030" stroke-width="1"/>
<rect x="254.95" y="283.60" width="3" height="1.00" fill="#fff" stroke="#303030" stroke-width="1"/>
<path d="M260.38 277.70V290.30" stroke="#d4002b" stroke-width="1"/>
<rect x="258.38" y="283.10" width="4" height="5.90" fill="#d4002b"/>
<path d="M264.30 271.20V290.00" stroke="#303030" stroke-width="1"/>
<rect x="262.80" y="278.20" width="3" height="10.80" fill="#fff" stroke="#303030" stroke-width="1"/>
<path d="M268.23 262.60V284.20" stroke="#303030" stroke-width="1"/>
<rect x="266.73" y="268.00" width="3" height="10.80" fill="#fff" stroke="#303030" stroke-width="1"/>
<path d="M272.15 265.80V284.20" stroke="#d4002b" stroke-width="1"/>
<rect x="270.15" y="268.00" width="4" height="7.50" fill="#d4002b"/>
<path d="M276.07 273.40V290.70" stroke="#d4002b" stroke-width="1"/>
<rect x="274.07" y="275.00" width="4" height="7.60" fill="#d4002b"/>
<path d="M280.00 277.20V286.40" stroke="#303030" stroke-width="1"/>
<rect x="278.50" y="280.40" width="3" height="2.20" fill="#fff" stroke="#303030" stroke-width="1"/>
<path d="M283.93 260.50V281.00" stroke="#303030" stroke-width="1"/>
<rect x="282.43" y="261.50" width="3" height="18.90" fill="#fff" stroke="#303030" stroke-width="1"/>
<path d="M287.85 239.90V262.00" stroke="#303030" stroke-width="1"/>
<rect x="286.35" y="245.80" width="3" height="15.70" fill="#fff" stroke="#303030" stroke-width="1"/>
<path d="M291.78 227.50V255.00" stroke="#303030" stroke-width="1"/>
<rect x="290.28" y="228.50" width="3" height="17.30" fill="#fff" stroke="#303030" stroke-width="1"/>
<path d="M295.70 217.00V229.00" stroke="#303030" stroke-width="1"/>
<rect x="294.20" y="218.20" width="3" height="10.30" fill="#fff" stroke="#303030" stroke-width="1"/>
<path d="M299.62 177.30V219.00" stroke="#303030" stroke-width="1"/>
<rect x="298.12" y="184.30" width="3" height="33.70" fill="#fff" stroke="#303030" stroke-width="1"/>
<path d="M303.55 173.00V209.20" stroke="#d4002b" stroke-width="1"/>
<rect x="301.55" y="184.30" width="4" height="14.10" fill="#d4002b"/>
<path d="M307.48 184.90V236.60" stroke="#d4002b" stroke-width="1"/>
<rect x="305.48" y="198.40" width="4" height="20.00" fill="#d4002b"/>
<path d="M311.40 195.00V223.60" stroke="#303030" stroke-width="1"/>
<rect x="309.90" y="196.20" width="3" height="22.20" fill="#fff" stroke="#303030" stroke-width="1"/>
<path d="M315.32 187.00V204.90" stroke="#d4002b" stroke-width="1"/>
<rect x="313.32" y="195.70" width="4" height="3.20" fill="#d4002b"/>
<path d="M319.25 198.50V223.90" stroke="#d4002b" stroke-width="1"/>
<rect x="317.25" y="198.90" width="4" height="15.90" fill="#d4002b"/>
<path d="M323.18 200.00V216.00" stroke="#303030" stroke-width="1"/>
<rect x="321.68" y="209.70" width="3" height="4.90" fill="#fff" stroke="#303030" stroke-width="1"/>
<path d="M327.10 178.40V211.40" stroke="#303030" stroke-width="1"/>
<rect x="325.60" y="181.10" width="3" height="28.60" fill="#fff" stroke="#303030" stroke-width="1"/>
<path d="M331.03 173.50V187.60" stroke="#d4002b" stroke-width="1"/>
<rect x="329.03" y="181.00" width="4" height="1.20" fill="#d4002b"/>
<path d="M334.95 177.30V195.10" stroke="#d4002b" stroke-width="1"/>
<rect x="332.95" y="182.20" width="4" height="10.20" fill="#d4002b"/>
<path d="M338.88 192.00V212.40" stroke="#d4002b" stroke-width="1"/>
<rect x="336.88" y="192.40" width="4" height="8.10" fill="#d4002b"/>
<path d="M342.80 193.00V208.10" stroke="#303030" stroke-width="1"/>
<rect x="341.30" y="200.00" width="3" height="1.00" fill="#fff" stroke="#303030" stroke-width="1"/>
<path d="M346.73 181.60V201.00" stroke="#303030" stroke-width="1"/>
<rect x="345.23" y="184.30" width="3" height="15.70" fill="#fff" stroke="#303030" stroke-width="1"/>
<path d="M350.65 177.00V186.50" stroke="#303030" stroke-width="1"/>
<rect x="349.15" y="177.80" width="3" height="6.50" fill="#fff" stroke="#303030" stroke-width="1"/>
<path d="M354.57 166.00V184.30" stroke="#303030" stroke-width="1"/>
<rect x="353.07" y="167.00" width="3" height="10.80" fill="#fff" stroke="#303030" stroke-width="1"/>
<path d="M358.50 141.60V168.60" stroke="#303030" stroke-width="1"/>
<rect x="357.00" y="145.90" width="3" height="20.60" fill="#fff" stroke="#303030" stroke-width="1"/>
<path d="M362.43 124.30V150.00" stroke="#303030" stroke-width="1"/>
<rect x="360.93" y="144.30" width="3" height="2.20" fill="#fff" stroke="#303030" stroke-width="1"/>
<path d="M366.35 128.10V150.80" stroke="#303030" stroke-width="1"/>
<rect x="364.85" y="131.90" width="3" height="13.00" fill="#fff" stroke="#303030" stroke-width="1"/>
<path d="M370.28 114.00V139.50" stroke="#303030" stroke-width="1"/>
<rect x="368.78" y="114.60" width="3" height="17.30" fill="#fff" stroke="#303030" stroke-width="1"/>
<path d="M374.20 109.70V129.70" stroke="#d4002b" stroke-width="1"/>
<rect x="372.20" y="114.60" width="4" height="2.70" fill="#d4002b"/>
<path d="M378.12 109.70V135.70" stroke="#d4002b" stroke-width="1"/>
<rect x="376.12" y="117.30" width="4" height="15.70" fill="#d4002b"/>
<path d="M382.05 119.50V137.30" stroke="#303030" stroke-width="1"/>
<rect x="380.55" y="127.60" width="3" height="5.40" fill="#fff" stroke="#303030" stroke-width="1"/>
<path d="M385.98 120.00V133.50" stroke="#303030" stroke-width="1"/>
<rect x="384.48" y="121.10" width="3" height="6.50" fill="#fff" stroke="#303030" stroke-width="1"/>
<path d="M389.90 118.40V157.80" stroke="#d4002b" stroke-width="1"/>
<rect x="387.90" y="121.10" width="4" height="34.60" fill="#d4002b"/>
<path d="M393.82 141.00V161.00" stroke="#303030" stroke-width="1"/>
<rect x="392.32" y="141.60" width="3" height="14.10" fill="#fff" stroke="#303030" stroke-width="1"/>
<path d="M397.75 139.50V155.70" stroke="#d4002b" stroke-width="1"/>
<rect x="395.75" y="141.60" width="4" height="6.50" fill="#d4002b"/>
<path d="M401.68 140.50V160.00" stroke="#d4002b" stroke-width="1"/>
<rect x="399.68" y="148.10" width="4" height="2.20" fill="#d4002b"/>
<path d="M405.60 135.10V155.70" stroke="#303030" stroke-width="1"/>
<rect x="404.10" y="136.80" width="3" height="13.50" fill="#fff" stroke="#303030" stroke-width="1"/>
<path d="M409.52 123.00V143.80" stroke="#303030" stroke-width="1"/>
<rect x="408.02" y="123.80" width="3" height="13.00" fill="#fff" stroke="#303030" stroke-width="1"/>
<path d="M413.45 119.50V130.30" stroke="#303030" stroke-width="1"/>
<rect x="411.95" y="122.70" width="3" height="1.10" fill="#fff" stroke="#303030" stroke-width="1"/>
<path d="M417.38 114.60V129.70" stroke="#303030" stroke-width="1"/>
<rect x="415.88" y="120.50" width="3" height="2.20" fill="#fff" stroke="#303030" stroke-width="1"/>
<path d="M421.30 119.50V136.90" stroke="#d4002b" stroke-width="1"/>
<rect x="419.30" y="120.50" width="4" height="11.90" fill="#d4002b"/>
<path d="M425.23 132.00V141.60" stroke="#d4002b" stroke-width="1"/>
<rect x="423.23" y="132.40" width="4" height="8.10" fill="#d4002b"/>
<path d="M429.15 132.00V147.40" stroke="#303030" stroke-width="1"/>
<rect x="427.65" y="132.40" width="3" height="8.10" fill="#fff" stroke="#303030" stroke-width="1"/>
<path d="M433.07 126.00V144.20" stroke="#d4002b" stroke-width="1"/>
<rect x="431.07" y="132.40" width="4" height="8.10" fill="#d4002b"/>
<path d="M437.00 139.00V157.60" stroke="#d4002b" stroke-width="1"/>
<rect x="435.00" y="140.00" width="4" height="17.20" fill="#d4002b"/>
<path d="M440.93 149.90V164.50" stroke="#303030" stroke-width="1"/>
<rect x="439.43" y="151.50" width="3" height="3.20" fill="#fff" stroke="#303030" stroke-width="1"/>
<path d="M444.85 138.50V153.10" stroke="#303030" stroke-width="1"/>
<rect x="443.35" y="140.10" width="3" height="11.40" fill="#fff" stroke="#303030" stroke-width="1"/>
<path d="M448.77 136.90V147.40" stroke="#d4002b" stroke-width="1"/>
<rect x="446.77" y="140.10" width="4" height="3.70" fill="#d4002b"/>
<path d="M452.70 130.40V144.00" stroke="#303030" stroke-width="1"/>
<rect x="451.20" y="138.10" width="3" height="5.70" fill="#fff" stroke="#303030" stroke-width="1"/>
<path d="M456.62 114.30V138.50" stroke="#303030" stroke-width="1"/>
<rect x="455.12" y="116.20" width="3" height="21.90" fill="#fff" stroke="#303030" stroke-width="1"/>
<path d="M460.55 116.00V133.70" stroke="#d4002b" stroke-width="1"/>
<rect x="458.55" y="116.20" width="4" height="12.20" fill="#d4002b"/>
<path d="M464.48 111.10V130.00" stroke="#303030" stroke-width="1"/>
<rect x="462.98" y="116.50" width="3" height="12.70" fill="#fff" stroke="#303030" stroke-width="1"/>
<path d="M468.40 99.70V117.50" stroke="#303030" stroke-width="1"/>
<rect x="466.90" y="101.40" width="3" height="15.60" fill="#fff" stroke="#303030" stroke-width="1"/>
<path d="M472.32 73.20V102.00" stroke="#303030" stroke-width="1"/>
<rect x="470.82" y="74.90" width="3" height="26.50" fill="#fff" stroke="#303030" stroke-width="1"/>
<path d="M476.25 73.00V89.50" stroke="#d4002b" stroke-width="1"/>
<rect x="474.25" y="74.90" width="4" height="14.00" fill="#d4002b"/>
<path d="M480.18 75.00V101.00" stroke="#303030" stroke-width="1"/>
<rect x="478.68" y="75.80" width="3" height="13.00" fill="#fff" stroke="#303030" stroke-width="1"/>
<path d="M484.10 60.40V78.00" stroke="#303030" stroke-width="1"/>
<rect x="482.60" y="63.20" width="3" height="14.20" fill="#fff" stroke="#303030" stroke-width="1"/>
<path d="M488.02 56.00V89.60" stroke="#d4002b" stroke-width="1"/>
<rect x="486.02" y="63.20" width="4" height="15.10" fill="#d4002b"/>
<path d="M491.95 75.40V105.00" stroke="#303030" stroke-width="1"/>
<rect x="490.45" y="77.40" width="3" height="1.00" fill="#fff" stroke="#303030" stroke-width="1"/>
<path d="M495.88 71.40V90.40" stroke="#d4002b" stroke-width="1"/>
<rect x="493.88" y="77.00" width="4" height="3.70" fill="#d4002b"/>
<path d="M499.80 71.40V83.50" stroke="#303030" stroke-width="1"/>
<rect x="498.30" y="73.00" width="3" height="7.70" fill="#fff" stroke="#303030" stroke-width="1"/>
<path d="M503.73 66.50V98.50" stroke="#d4002b" stroke-width="1"/>
<rect x="501.73" y="73.00" width="4" height="18.60" fill="#d4002b"/>
<path d="M507.65 83.50V105.00" stroke="#303030" stroke-width="1"/>
<rect x="506.15" y="83.90" width="3" height="7.60" fill="#fff" stroke="#303030" stroke-width="1"/>
<path d="M511.57 70.00V87.20" stroke="#303030" stroke-width="1"/>
<rect x="510.07" y="70.40" width="3" height="13.50" fill="#fff" stroke="#303030" stroke-width="1"/>
<path d="M515.50 68.20V81.80" stroke="#d4002b" stroke-width="1"/>
<rect x="513.50" y="69.90" width="4" height="7.00" fill="#d4002b"/>
<path d="M519.42 76.50V89.30" stroke="#d4002b" stroke-width="1"/>
<rect x="517.42" y="76.90" width="4" height="1.10" fill="#d4002b"/>
<path d="M523.35 68.20V80.10" stroke="#303030" stroke-width="1"/>
<rect x="521.85" y="76.90" width="3" height="1.00" fill="#fff" stroke="#303030" stroke-width="1"/>
<path d="M527.27 73.60V87.20" stroke="#d4002b" stroke-width="1"/>
<rect x="525.27" y="76.40" width="4" height="1.00" fill="#d4002b"/>
<path d="M531.20 65.50V77.50" stroke="#303030" stroke-width="1"/>
<rect x="529.70" y="76.70" width="3" height="1.00" fill="#fff" stroke="#303030" stroke-width="1"/>
<path d="M535.12 71.50V83.90" stroke="#d4002b" stroke-width="1"/>
<rect x="533.12" y="76.40" width="4" height="2.10" fill="#d4002b"/>
<path d="M539.05 74.20V83.90" stroke="#d4002b" stroke-width="1"/>
<rect x="537.05" y="78.50" width="4" height="2.20" fill="#d4002b"/>
<path d="M542.98 65.00V80.50" stroke="#303030" stroke-width="1"/>
<rect x="541.48" y="74.20" width="3" height="5.90" fill="#fff" stroke="#303030" stroke-width="1"/>
<path d="M546.90 72.60V94.20" stroke="#d4002b" stroke-width="1"/>
<rect x="544.90" y="74.20" width="4" height="6.50" fill="#d4002b"/>
<path d="M550.83 55.80V81.50" stroke="#303030" stroke-width="1"/>
<rect x="549.33" y="58.50" width="3" height="22.70" fill="#fff" stroke="#303030" stroke-width="1"/>
<path d="M554.75 43.90V63.40" stroke="#303030" stroke-width="1"/>
<rect x="553.25" y="46.60" width="3" height="11.90" fill="#fff" stroke="#303030" stroke-width="1"/>
<path d="M558.67 38.00V57.40" stroke="#d4002b" stroke-width="1"/>
<rect x="556.67" y="46.10" width="4" height="7.00" fill="#d4002b"/>
<path d="M562.60 49.90V65.00" stroke="#303030" stroke-width="1"/>
<rect x="561.10" y="53.10" width="3" height="1.00" fill="#fff" stroke="#303030" stroke-width="1"/>
<path d="M566.52 31.60V53.80" stroke="#303030" stroke-width="1"/>
<rect x="565.02" y="40.10" width="3" height="13.30" fill="#fff" stroke="#303030" stroke-width="1"/>
<path d="M570.45 29.10V48.60" stroke="#303030" stroke-width="1"/>
<rect x="568.95" y="32.20" width="3" height="7.90" fill="#fff" stroke="#303030" stroke-width="1"/>
<path d="M574.38 24.30V48.60" stroke="#d4002b" stroke-width="1"/>
<rect x="572.38" y="32.20" width="4" height="12.80" fill="#d4002b"/>
<path d="M578.30 38.20V59.50" stroke="#d4002b" stroke-width="1"/>
<rect x="576.30" y="44.30" width="4" height="11.60" fill="#d4002b"/>
<path d="M582.23 38.90V60.70" stroke="#303030" stroke-width="1"/>
<rect x="580.73" y="49.20" width="3" height="6.70" fill="#fff" stroke="#303030" stroke-width="1"/>
<path d="M586.15 39.50V57.70" stroke="#303030" stroke-width="1"/>
<rect x="584.65" y="41.30" width="3" height="7.90" fill="#fff" stroke="#303030" stroke-width="1"/>
<path d="M590.08 33.40V59.50" stroke="#d4002b" stroke-width="1"/>
<rect x="588.08" y="41.30" width="4" height="14.60" fill="#d4002b"/>
<path d="M594.00 52.80V86.90" stroke="#d4002b" stroke-width="1"/>
<rect x="592.00" y="55.30" width="4" height="19.40" fill="#d4002b"/>
<path d="M597.92 68.00V110.00" stroke="#d4002b" stroke-width="1"/>
<rect x="595.92" y="74.10" width="4" height="11.60" fill="#d4002b"/>
<path d="M601.85 79.60V177.00" stroke="#d4002b" stroke-width="1"/>
<rect x="599.85" y="85.70" width="4" height="60.30" fill="#d4002b"/>
<path d="M605.77 115.00V169.70" stroke="#303030" stroke-width="1"/>
<rect x="604.27" y="115.50" width="3" height="30.50" fill="#fff" stroke="#303030" stroke-width="1"/>
<path d="M609.70 86.90V147.20" stroke="#303030" stroke-width="1"/>
<rect x="608.20" y="91.80" width="3" height="23.70" fill="#fff" stroke="#303030" stroke-width="1"/>
<path d="M613.62 83.90V118.60" stroke="#d4002b" stroke-width="1"/>
<rect x="611.62" y="91.20" width="4" height="1.80" fill="#d4002b"/>
<path d="M617.55 80.80V100.30" stroke="#d4002b" stroke-width="1"/>
<rect x="615.55" y="91.80" width="4" height="3.60" fill="#d4002b"/>
<path d="M621.48 76.60V111.90" stroke="#303030" stroke-width="1"/>
<rect x="619.98" y="82.00" width="3" height="13.40" fill="#fff" stroke="#303030" stroke-width="1"/>
<path d="M625.40 75.30V102.70" stroke="#d4002b" stroke-width="1"/>
<rect x="623.40" y="82.00" width="4" height="10.40" fill="#d4002b"/>
<path d="M629.33 54.70V93.00" stroke="#303030" stroke-width="1"/>
<rect x="627.83" y="55.90" width="3" height="36.50" fill="#fff" stroke="#303030" stroke-width="1"/>
<path d="M633.25 55.50V84.50" stroke="#d4002b" stroke-width="1"/>
<rect x="631.25" y="55.90" width="4" height="20.70" fill="#d4002b"/>
<path d="M637.17 66.20V89.90" stroke="#303030" stroke-width="1"/>
<rect x="635.67" y="69.30" width="3" height="7.30" fill="#fff" stroke="#303030" stroke-width="1"/>
<path d="M641.10 62.00V77.20" stroke="#d4002b" stroke-width="1"/>
<rect x="639.10" y="69.30" width="4" height="1.00" fill="#d4002b"/>
<path d="M645.02 41.90V73.50" stroke="#303030" stroke-width="1"/>
<rect x="643.52" y="50.40" width="3" height="18.90" fill="#fff" stroke="#303030" stroke-width="1"/>
<path d="M648.95 50.10V58.40" stroke="#d4002b" stroke-width="1"/>
<rect x="646.95" y="50.10" width="4" height="7.30" fill="#d4002b"/>
</g>
<path d="M126.92 469.25 L130.85 468.31 L134.78 469.61 L138.70 473.07 L142.62 474.17 L146.55 474.29 L150.47 473.82 L154.40 471.49 L158.32 473.97 L162.25 475.24 L166.17 475.90 L170.10 474.84 L174.02 470.44 L177.95 467.41 L181.88 464.92 L185.80 464.51 L189.72 463.96 L193.65 463.30 L197.57 464.10 L201.50 465.87 L205.42 471.13 L209.35 474.66 L213.27 477.36 L217.20 479.35 L221.12 480.66 L225.05 482.47 L228.97 481.67 L232.90 480.79 L236.82 478.28 L240.75 474.54 L244.67 471.89 L248.60 468.32 L252.52 462.56 L256.45 456.94 L260.38 451.01 L264.30 443.29 L268.23 435.41 L272.15 430.22 L276.07 424.38 L280.00 419.58 L283.93 412.88 L287.85 406.04 L291.78 399.75 L295.70 395.08 L299.62 392.84 L303.55 391.71 L307.48 392.25 L311.40 390.84 L315.32 393.10 L319.25 397.67 L323.18 402.61 L327.10 403.67 L331.03 404.22 L334.95 404.17 L338.88 403.16 L342.80 404.38 L346.73 402.81 L350.65 398.04 L354.57 393.11 L358.50 392.53 L362.43 393.85 L366.35 391.81 L370.28 387.44 L374.20 384.33 L378.12 386.05 L382.05 388.09 L385.98 389.80 L389.90 396.21 L393.82 398.54 L397.75 403.41 L401.68 409.98 L405.60 413.50 L409.52 412.45 L413.45 411.99 L417.38 412.14 L421.30 409.26 L425.23 409.88 L429.15 408.78 L433.07 408.79 L437.00 415.57 L440.93 423.96 L444.85 429.90 L448.77 437.12 L452.70 440.80 L456.62 436.95 L460.55 436.41 L464.48 431.39 L468.40 420.28 L472.32 409.62 L476.25 404.42 L480.18 395.75 L484.10 388.41 L488.02 390.33 L491.95 389.63 L495.88 392.22 L499.80 394.78 L503.73 400.32 L507.65 401.90 L511.57 403.90 L515.50 407.02 L519.42 406.97 L523.35 407.16 L527.27 407.08 L531.20 408.22 L535.12 407.03 L539.05 407.61 L542.98 409.20 L546.90 411.89 L550.83 408.96 L554.75 405.79 L558.67 405.39 L562.60 405.00 L566.52 402.34 L570.45 397.75 L574.38 397.99 L578.30 398.11 L582.23 402.43 L586.15 405.36 L590.08 408.76 L594.00 415.64 L597.92 424.37 L601.85 435.77 L605.77 441.47 L609.70 443.16 L613.62 446.19 L617.55 450.99 L621.48 451.04 L625.40 448.59 L629.33 442.20 L633.25 436.75 L637.17 432.55 L641.10 430.38 L645.02 425.81 L648.95 421.88" stroke="#1f2d7a" stroke-width="1.8" fill="none" stroke-linejoin="round"/>
<path d="M174.02 472.65 L177.95 472.50 L181.88 472.24 L185.80 471.85 L189.72 471.15 L193.65 470.31 L197.57 469.53 L201.50 468.92 L205.42 468.89 L209.35 468.94 L213.27 469.11 L217.20 469.37 L221.12 469.82 L225.05 470.75 L228.97 471.84 L232.90 473.06 L236.82 474.12 L240.75 474.94 L244.67 475.60 L248.60 475.92 L252.52 475.67 L256.45 474.58 L260.38 472.76 L264.30 470.14 L268.23 466.76 L272.15 462.88 L276.07 458.41 L280.00 453.63 L283.93 448.41 L287.85 442.85 L291.78 437.10 L295.70 431.19 L299.62 425.38 L303.55 419.93 L307.48 414.96 L311.40 410.33 L315.32 406.47 L319.25 403.56 L323.18 401.44 L327.10 399.85 L331.03 398.67 L334.95 398.00 L338.88 397.77 L342.80 398.13 L346.73 398.72 L350.65 399.12 L354.57 399.23 L358.50 399.25 L362.43 399.48 L366.35 399.39 L370.28 398.60 L374.20 397.19 L378.12 395.84 L382.05 394.60 L385.98 393.49 L389.90 392.96 L393.82 392.51 L397.75 392.55 L401.68 393.47 L405.60 395.04 L409.52 396.57 L413.45 397.97 L417.38 399.53 L421.30 401.21 L425.23 403.18 L429.15 404.93 L433.07 406.52 L437.00 408.50 L440.93 410.64 L444.85 413.05 L448.77 415.64 L452.70 418.01 L456.62 419.82 L460.55 421.66 L464.48 423.15 L468.40 423.78 L472.32 423.80 L476.25 423.38 L480.18 422.38 L484.10 420.81 L488.02 418.87 L491.95 416.23 L495.88 413.33 L499.80 410.08 L503.73 406.96 L507.65 404.27 L511.57 401.77 L515.50 399.89 L519.42 398.87 L523.35 398.68 L527.27 398.88 L531.20 399.84 L535.12 401.27 L539.05 402.60 L542.98 404.11 L546.90 405.62 L550.83 406.71 L554.75 407.13 L558.67 407.40 L562.60 407.49 L566.52 407.13 L570.45 406.42 L574.38 405.71 L578.30 405.02 L582.23 404.58 L586.15 404.45 L590.08 404.54 L594.00 405.03 L597.92 405.99 L601.85 408.05 L605.77 410.80 L609.70 413.70 L613.62 416.87 L617.55 420.61 L621.48 424.71 L625.40 428.61 L629.33 432.00 L633.25 434.64 L637.17 436.73 L641.10 438.39 L645.02 439.17 L648.95 438.98" stroke="#ef4a63" stroke-width="1.4" fill="none"/>
<path d="M197.57 594.60 L201.50 594.73 L205.42 595.78 L209.35 596.04 L213.27 596.60 L217.20 596.73 L221.12 597.41 L225.05 599.16 L228.97 599.90 L232.90 600.42 L236.82 600.22 L240.75 598.68 L244.67 597.45 L248.60 594.97 L252.52 591.57 L256.45 588.08 L260.38 585.00 L264.30 581.13 L268.23 576.76 L272.15 572.62 L276.07 569.05 L280.00 565.83 L283.93 561.14 L287.85 555.78 L291.78 549.61 L295.70 543.05 L299.62 537.82 L303.55 534.88 L307.48 533.31 L311.40 529.91 L315.32 527.49 L319.25 526.87 L323.18 525.38 L327.10 521.28 L331.03 517.43 L334.95 515.75 L338.88 516.00 L342.80 517.87 L346.73 518.71 L350.65 518.51 L354.57 516.56 L358.50 513.54 L362.43 513.20 L366.35 511.74 L370.28 508.64 L374.20 506.45 L378.12 507.53 L382.05 508.20 L385.98 507.58 L389.90 508.82 L393.82 509.17 L397.75 511.15 L401.68 513.82 L405.60 515.90 L409.52 516.75 L413.45 516.34 L417.38 516.73 L421.30 518.73 L425.23 521.02 L429.15 521.45 L433.07 522.91 L437.00 526.14 L440.93 526.75 L444.85 527.30 L448.77 527.75 L452.70 527.68 L456.62 526.28 L460.55 527.18 L464.48 526.86 L468.40 526.05 L472.32 524.17 L476.25 522.85 L480.18 520.95 L484.10 518.34 L488.02 516.47 L491.95 514.74 L495.88 514.31 L499.80 512.78 L503.73 513.40 L507.65 515.56 L511.57 515.04 L515.50 516.49 L519.42 518.66 L523.35 520.74 L527.27 521.46 L531.20 523.38 L535.12 525.49 L539.05 525.78 L542.98 525.46 L546.90 525.46 L550.83 523.91 L554.75 520.58 L558.67 519.17 L562.60 519.10 L566.52 517.70 L570.45 515.65 L574.38 515.41 L578.30 516.14 L582.23 516.39 L586.15 515.79 L590.08 516.41 L594.00 519.36 L597.92 522.99 L601.85 530.16 L605.77 536.09 L609.70 539.59 L613.62 543.16 L617.55 547.53 L621.48 551.66 L625.40 554.70 L629.33 554.37 L633.25 555.99 L637.17 557.83 L641.10 558.27 L645.02 555.61 L648.95 552.16" stroke="#1f2d7a" stroke-width="1.8" fill="none" stroke-linejoin="round"/>
<path d="M276.07 591.76 L280.00 590.39 L283.93 588.79 L287.85 586.88 L291.78 584.67 L295.70 582.12 L299.62 579.31 L303.55 576.34 L307.48 573.20 L311.40 569.87 L315.32 566.40 L319.25 562.90 L323.18 559.41 L327.10 555.79 L331.03 552.09 L334.95 548.48 L338.88 545.05 L342.80 541.85 L346.73 538.88 L350.65 536.11 L354.57 533.44 L358.50 530.80 L362.43 528.29 L366.35 525.94 L370.28 523.69 L374.20 521.64 L378.12 519.95 L382.05 518.54 L385.98 517.24 L389.90 516.07 L393.82 515.08 L397.75 514.30 L401.68 513.68 L405.60 513.23 L409.52 513.02 L413.45 512.96 L417.38 513.01 L421.30 513.14 L425.23 513.29 L429.15 513.42 L433.07 513.63 L437.00 514.09 L440.93 514.72 L444.85 515.39 L448.77 516.15 L452.70 517.06 L456.62 518.00 L460.55 518.94 L464.48 519.82 L468.40 520.70 L472.32 521.44 L476.25 522.09 L480.18 522.55 L484.10 522.77 L488.02 522.80 L491.95 522.70 L495.88 522.60 L499.80 522.42 L503.73 522.16 L507.65 521.90 L511.57 521.60 L515.50 521.29 L519.42 520.93 L523.35 520.65 L527.27 520.37 L531.20 520.16 L535.12 520.06 L539.05 520.03 L542.98 519.95 L546.90 519.88 L550.83 519.78 L554.75 519.61 L558.67 519.44 L562.60 519.35 L566.52 519.32 L570.45 519.28 L574.38 519.31 L578.30 519.40 L582.23 519.57 L586.15 519.68 L590.08 519.72 L594.00 519.93 L597.92 520.24 L601.85 520.79 L605.77 521.52 L609.70 522.38 L613.62 523.32 L617.55 524.37 L621.48 525.61 L625.40 527.00 L629.33 528.37 L633.25 529.90 L637.17 531.68 L641.10 533.54 L645.02 535.28 L648.95 536.92" stroke="#ef4a63" stroke-width="1.4" fill="none"/>
<path d="M311.40 686.86 L315.32 683.07 L319.25 680.20 L323.18 677.38 L327.10 673.06 L331.03 669.05 L334.95 665.77 L338.88 662.89 L342.80 659.89 L346.73 656.35 L350.65 652.68 L354.57 648.84 L358.50 645.03 L362.43 641.98 L366.35 638.84 L370.28 635.79 L374.20 633.62 L378.12 632.51 L382.05 632.95 L385.98 632.22 L389.90 632.02 L393.82 632.24 L397.75 632.58 L401.68 632.33 L405.60 631.78 L409.52 632.01 L413.45 632.13 L417.38 631.65 L421.30 631.31 L425.23 631.32 L429.15 631.74 L433.07 632.83 L437.00 634.71 L440.93 636.23 L444.85 636.66 L448.77 637.79 L452.70 639.07 L456.62 639.04 L460.55 638.90 L464.48 638.44 L468.40 637.99 L472.32 636.19 L476.25 635.58 L480.18 634.10 L484.10 632.53 L488.02 632.36 L491.95 632.69 L495.88 633.22 L499.80 633.54 L503.73 634.16 L507.65 634.20 L511.57 633.93 L515.50 633.65 L519.42 632.83 L523.35 632.18 L527.27 631.95 L531.20 631.54 L535.12 631.43 L539.05 632.43 L542.98 632.52 L546.90 633.49 L550.83 633.56 L554.75 633.62 L558.67 633.68 L562.60 634.40 L566.52 634.75 L570.45 633.93 L574.38 634.13 L578.30 634.74 L582.23 635.32 L586.15 634.68 L590.08 635.04 L594.00 636.88 L597.92 638.84 L601.85 642.35 L605.77 645.11 L609.70 647.10 L613.62 649.16 L617.55 651.19 L621.48 652.62 L625.40 654.75 L629.33 655.10 L633.25 657.49 L637.17 659.59 L641.10 661.05 L645.02 661.59 L648.95 662.84" stroke="#1f2d7a" stroke-width="1.8" fill="none" stroke-linejoin="round"/>
<path d="M440.93 646.00 L444.85 644.52 L448.77 643.19 L452.70 641.98 L456.62 640.85 L460.55 639.85 L464.48 638.95 L468.40 638.13 L472.32 637.34 L476.25 636.63 L480.18 635.97 L484.10 635.38 L488.02 634.90 L491.95 634.53 L495.88 634.28 L499.80 634.12 L503.73 634.07 L507.65 634.09 L511.57 634.13 L515.50 634.15 L519.42 634.17 L523.35 634.17 L527.27 634.17 L531.20 634.13 L535.12 634.11 L539.05 634.13 L542.98 634.14 L546.90 634.18 L550.83 634.24 L554.75 634.31 L558.67 634.38 L562.60 634.45 L566.52 634.51 L570.45 634.49 L574.38 634.43 L578.30 634.37 L582.23 634.30 L586.15 634.17 L590.08 634.05 L594.00 633.99 L597.92 634.00 L601.85 634.13 L605.77 634.39 L609.70 634.73 L613.62 635.17 L617.55 635.72 L621.48 636.32 L625.40 636.97 L629.33 637.61 L633.25 638.32 L637.17 639.06 L641.10 639.85 L645.02 640.67 L648.95 641.53" stroke="#ef4a63" stroke-width="1.4" fill="none"/>
<rect x="11.5" y="19.5" width="783" height="341" fill="none" stroke="#36467a" stroke-width="1"/>
<rect x="11.5" y="370.5" width="783" height="120" fill="none" stroke="#36467a" stroke-width="1"/>
<rect x="11.5" y="490.5" width="783" height="119" fill="none" stroke="#36467a" stroke-width="1"/>
<rect x="11.5" y="609.5" width="783" height="120" fill="none" stroke="#36467a" stroke-width="1"/>
<path d="M12.60 361V362.2M12.60 368.8V370M12.60 729V730.2M16.52 361V362.2M16.52 368.8V370M16.52 729V730.2M20.45 361V362.2M20.45 368.8V370M20.45 729V730.2M24.38 361V362.2M24.38 368.8V370M24.38 729V730.2M28.30 361V362.2M28.30 368.8V370M28.30 729V730.2M32.23 361V362.2M32.23 368.8V370M32.23 729V730.2M36.15 361V362.2M36.15 368.8V370M36.15 729V730.2M40.07 361V362.2M40.07 368.8V370M40.07 729V730.2M44.00 361V362.2M44.00 368.8V370M44.00 729V730.2M47.92 361V362.2M47.92 368.8V370M47.92 729V730.2M51.85 361V362.2M51.85 368.8V370M51.85 729V730.2M55.77 361V362.2M55.77 368.8V370M55.77 729V730.2M59.70 361V362.2M59.70 368.8V370M59.70 729V730.2M63.62 361V362.2M63.62 368.8V370M63.62 729V730.2M67.55 361V362.2M67.55 368.8V370M67.55 729V730.2M71.47 361V362.2M71.47 368.8V370M71.47 729V730.2M75.40 361V362.2M75.40 368.8V370M75.40 729V730.2M79.32 361V362.2M79.32 368.8V370M79.32 729V730.2M83.25 361V362.2M83.25 368.8V370M83.25 729V730.2M87.17 361V362.2M87.17 368.8V370M87.17 729V730.2M91.10 361V362.2M91.10 368.8V370M91.10 729V730.2M95.02 361V362.2M95.02 368.8V370M95.02 729V730.2M98.95 361V362.2M98.95 368.8V370M98.95 729V730.2M102.87 361V362.2M102.87 368.8V370M102.87 729V730.2M106.80 361V362.2M106.80 368.8V370M106.80 729V730.2M110.72 361V362.2M110.72 368.8V370M110.72 729V730.2M114.65 361V362.2M114.65 368.8V370M114.65 729V730.2M118.57 361V362.2M118.57 368.8V370M118.57 729V730.2M122.50 361V362.2M122.50 368.8V370M122.50 729V730.2M126.42 361V362.2M126.42 368.8V370M126.42 729V730.2M130.35 361V362.2M130.35 368.8V370M130.35 729V730.2M134.28 361V362.2M134.28 368.8V370M134.28 729V730.2M138.20 361V362.2M138.20 368.8V370M138.20 729V730.2M142.12 361V362.2M142.12 368.8V370M142.12 729V730.2M146.05 361V362.2M146.05 368.8V370M146.05 729V730.2M149.97 361V362.2M149.97 368.8V370M149.97 729V730.2M153.90 361V362.2M153.90 368.8V370M153.90 729V730.2M157.82 361V362.2M157.82 368.8V370M157.82 729V730.2M161.75 361V362.2M161.75 368.8V370M161.75 729V730.2M165.67 361V362.2M165.67 368.8V370M165.67 729V730.2M169.60 361V362.2M169.60 368.8V370M169.60 729V730.2M173.52 361V362.2M173.52 368.8V370M173.52 729V730.2M177.45 361V362.2M177.45 368.8V370M177.45 729V730.2M181.38 361V362.2M181.38 368.8V370M181.38 729V730.2M185.30 361V362.2M185.30 368.8V370M185.30 729V730.2M189.22 361V362.2M189.22 368.8V370M189.22 729V730.2M193.15 361V362.2M193.15 368.8V370M193.15 729V730.2M197.07 361V362.2M197.07 368.8V370M197.07 729V730.2M201.00 361V362.2M201.00 368.8V370M201.00 729V730.2M204.92 361V362.2M204.92 368.8V370M204.92 729V730.2M208.85 361V362.2M208.85 368.8V370M208.85 729V730.2M212.77 361V362.2M212.77 368.8V370M212.77 729V730.2M216.70 361V362.2M216.70 368.8V370M216.70 729V730.2M220.62 361V362.2M220.62 368.8V370M220.62 729V730.2M224.55 361V362.2M224.55 368.8V370M224.55 729V730.2M228.47 361V362.2M228.47 368.8V370M228.47 729V730.2M232.40 361V362.2M232.40 368.8V370M232.40 729V730.2M236.32 361V362.2M236.32 368.8V370M236.32 729V730.2M240.25 361V362.2M240.25 368.8V370M240.25 729V730.2M244.17 361V362.2M244.17 368.8V370M244.17 729V730.2M248.10 361V362.2M248.10 368.8V370M248.10 729V730.2M252.02 361V362.2M252.02 368.8V370M252.02 729V730.2M255.95 361V362.2M255.95 368.8V370M255.95 729V730.2M259.88 361V362.2M259.88 368.8V370M259.88 729V730.2M263.80 361V362.2M263.80 368.8V370M263.80 729V730.2M267.73 361V362.2M267.73 368.8V370M267.73 729V730.2M271.65 361V362.2M271.65 368.8V370M271.65 729V730.2M275.57 361V362.2M275.57 368.8V370M275.57 729V730.2M279.50 361V362.2M279.50 368.8V370M279.50 729V730.2M283.43 361V362.2M283.43 368.8V370M283.43 729V730.2M287.35 361V362.2M287.35 368.8V370M287.35 729V730.2M291.28 361V362.2M291.28 368.8V370M291.28 729V730.2M295.20 361V362.2M295.20 368.8V370M295.20 729V730.2M299.12 361V362.2M299.12 368.8V370M299.12 729V730.2M303.05 361V362.2M303.05 368.8V370M303.05 729V730.2M306.98 361V362.2M306.98 368.8V370M306.98 729V730.2M310.90 361V362.2M310.90 368.8V370M310.90 729V730.2M314.82 361V362.2M314.82 368.8V370M314.82 729V730.2M318.75 361V362.2M318.75 368.8V370M318.75 729V730.2M322.68 361V362.2M322.68 368.8V370M322.68 729V730.2M326.60 361V362.2M326.60 368.8V370M326.60 729V730.2M330.53 361V362.2M330.53 368.8V370M330.53 729V730.2M334.45 361V362.2M334.45 368.8V370M334.45 729V730.2M338.38 361V362.2M338.38 368.8V370M338.38 729V730.2M342.30 361V362.2M342.30 368.8V370M342.30 729V730.2M346.23 361V362.2M346.23 368.8V370M346.23 729V730.2M350.15 361V362.2M350.15 368.8V370M350.15 729V730.2M354.07 361V362.2M354.07 368.8V370M354.07 729V730.2M358.00 361V362.2M358.00 368.8V370M358.00 729V730.2M361.93 361V362.2M361.93 368.8V370M361.93 729V730.2M365.85 361V362.2M365.85 368.8V370M365.85 729V730.2M369.78 361V362.2M369.78 368.8V370M369.78 729V730.2M373.70 361V362.2M373.70 368.8V370M373.70 729V730.2M377.62 361V362.2M377.62 368.8V370M377.62 729V730.2M381.55 361V362.2M381.55 368.8V370M381.55 729V730.2M385.48 361V362.2M385.48 368.8V370M385.48 729V730.2M389.40 361V362.2M389.40 368.8V370M389.40 729V730.2M393.32 361V362.2M393.32 368.8V370M393.32 729V730.2M397.25 361V362.2M397.25 368.8V370M397.25 729V730.2M401.18 361V362.2M401.18 368.8V370M401.18 729V730.2M405.10 361V362.2M405.10 368.8V370M405.10 729V730.2M409.02 361V362.2M409.02 368.8V370M409.02 729V730.2M412.95 361V362.2M412.95 368.8V370M412.95 729V730.2M416.88 361V362.2M416.88 368.8V370M416.88 729V730.2M420.80 361V362.2M420.80 368.8V370M420.80 729V730.2M424.73 361V362.2M424.73 368.8V370M424.73 729V730.2M428.65 361V362.2M428.65 368.8V370M428.65 729V730.2M432.57 361V362.2M432.57 368.8V370M432.57 729V730.2M436.50 361V362.2M436.50 368.8V370M436.50 729V730.2M440.43 361V362.2M440.43 368.8V370M440.43 729V730.2M444.35 361V362.2M444.35 368.8V370M444.35 729V730.2M448.27 361V362.2M448.27 368.8V370M448.27 729V730.2M452.20 361V362.2M452.20 368.8V370M452.20 729V730.2M456.12 361V362.2M456.12 368.8V370M456.12 729V730.2M460.05 361V362.2M460.05 368.8V370M460.05 729V730.2M463.98 361V362.2M463.98 368.8V370M463.98 729V730.2M467.90 361V362.2M467.90 368.8V370M467.90 729V730.2M471.82 361V362.2M471.82 368.8V370M471.82 729V730.2M475.75 361V362.2M475.75 368.8V370M475.75 729V730.2M479.68 361V362.2M479.68 368.8V370M479.68 729V730.2M483.60 361V362.2M483.60 368.8V370M483.60 729V730.2M487.52 361V362.2M487.52 368.8V370M487.52 729V730.2M491.45 361V362.2M491.45 368.8V370M491.45 729V730.2M495.38 361V362.2M495.38 368.8V370M495.38 729V730.2M499.30 361V362.2M499.30 368.8V370M499.30 729V730.2M503.23 361V362.2M503.23 368.8V370M503.23 729V730.2M507.15 361V362.2M507.15 368.8V370M507.15 729V730.2M511.07 361V362.2M511.07 368.8V370M511.07 729V730.2M515.00 361V362.2M515.00 368.8V370M515.00 729V730.2M518.92 361V362.2M518.92 368.8V370M518.92 729V730.2M522.85 361V362.2M522.85 368.8V370M522.85 729V730.2M526.77 361V362.2M526.77 368.8V370M526.77 729V730.2M530.70 361V362.2M530.70 368.8V370M530.70 729V730.2M534.62 361V362.2M534.62 368.8V370M534.62 729V730.2M538.55 361V362.2M538.55 368.8V370M538.55 729V730.2M542.48 361V362.2M542.48 368.8V370M542.48 729V730.2M546.40 361V362.2M546.40 368.8V370M546.40 729V730.2M550.33 361V362.2M550.33 368.8V370M550.33 729V730.2M554.25 361V362.2M554.25 368.8V370M554.25 729V730.2M558.17 361V362.2M558.17 368.8V370M558.17 729V730.2M562.10 361V362.2M562.10 368.8V370M562.10 729V730.2M566.02 361V362.2M566.02 368.8V370M566.02 729V730.2M569.95 361V362.2M569.95 368.8V370M569.95 729V730.2M573.88 361V362.2M573.88 368.8V370M573.88 729V730.2M577.80 361V362.2M577.80 368.8V370M577.80 729V730.2M581.73 361V362.2M581.73 368.8V370M581.73 729V730.2M585.65 361V362.2M585.65 368.8V370M585.65 729V730.2M589.58 361V362.2M589.58 368.8V370M589.58 729V730.2M593.50 361V362.2M593.50 368.8V370M593.50 729V730.2M597.42 361V362.2M597.42 368.8V370M597.42 729V730.2M601.35 361V362.2M601.35 368.8V370M601.35 729V730.2M605.27 361V362.2M605.27 368.8V370M605.27 729V730.2M609.20 361V362.2M609.20 368.8V370M609.20 729V730.2M613.12 361V362.2M613.12 368.8V370M613.12 729V730.2M617.05 361V362.2M617.05 368.8V370M617.05 729V730.2M620.98 361V362.2M620.98 368.8V370M620.98 729V730.2M624.90 361V362.2M624.90 368.8V370M624.90 729V730.2M628.83 361V362.2M628.83 368.8V370M628.83 729V730.2M632.75 361V362.2M632.75 368.8V370M632.75 729V730.2M636.67 361V362.2M636.67 368.8V370M636.67 729V730.2M640.60 361V362.2M640.60 368.8V370M640.60 729V730.2M644.52 361V362.2M644.52 368.8V370M644.52 729V730.2M648.45 361V362.2M648.45 368.8V370M648.45 729V730.2M652.38 361V362.2M652.38 368.8V370M652.38 729V730.2M656.30 361V362.2M656.30 368.8V370M656.30 729V730.2M660.23 361V362.2M660.23 368.8V370M660.23 729V730.2M664.15 361V362.2M664.15 368.8V370M664.15 729V730.2M668.08 361V362.2M668.08 368.8V370M668.08 729V730.2M672.00 361V362.2M672.00 368.8V370M672.00 729V730.2M675.92 361V362.2M675.92 368.8V370M675.92 729V730.2M679.85 361V362.2M679.85 368.8V370M679.85 729V730.2M683.77 361V362.2M683.77 368.8V370M683.77 729V730.2M687.70 361V362.2M687.70 368.8V370M687.70 729V730.2M691.62 361V362.2M691.62 368.8V370M691.62 729V730.2M695.55 361V362.2M695.55 368.8V370M695.55 729V730.2M699.48 361V362.2M699.48 368.8V370M699.48 729V730.2M703.40 361V362.2M703.40 368.8V370M703.40 729V730.2M707.33 361V362.2M707.33 368.8V370M707.33 729V730.2M711.25 361V362.2M711.25 368.8V370M711.25 729V730.2M715.17 361V362.2M715.17 368.8V370M715.17 729V730.2M719.10 361V362.2M719.10 368.8V370M719.10 729V730.2M723.02 361V362.2M723.02 368.8V370M723.02 729V730.2M726.95 361V362.2M726.95 368.8V370M726.95 729V730.2M730.88 361V362.2M730.88 368.8V370M730.88 729V730.2M734.80 361V362.2M734.80 368.8V370M734.80 729V730.2M738.73 361V362.2M738.73 368.8V370M738.73 729V730.2M742.65 361V362.2M742.65 368.8V370M742.65 729V730.2M746.58 361V362.2M746.58 368.8V370M746.58 729V730.2M750.50 361V362.2M750.50 368.8V370M750.50 729V730.2M754.42 361V362.2M754.42 368.8V370M754.42 729V730.2M758.35 361V362.2M758.35 368.8V370M758.35 729V730.2M762.27 361V362.2M762.27 368.8V370M762.27 729V730.2M766.20 361V362.2M766.20 368.8V370M766.20 729V730.2M770.12 361V362.2M770.12 368.8V370M770.12 729V730.2M774.05 361V362.2M774.05 368.8V370M774.05 729V730.2M777.98 361V362.2M777.98 368.8V370M777.98 729V730.2M781.90 361V362.2M781.90 368.8V370M781.90 729V730.2M785.82 361V362.2M785.82 368.8V370M785.82 729V730.2M789.75 361V362.2M789.75 368.8V370M789.75 729V730.2" stroke="#36467a" stroke-width="1.1"/>
<path d="M795 21.0h1.3M795 26.0h1.3M795 31.0h1.3M795 36.0h1.3M795 41.0h1.3M795 46.0h1.3M795 51.0h1.3M795 56.0h1.3M795 61.0h1.3M795 66.0h1.3M795 71.0h1.3M795 76.0h1.3M795 81.0h1.3M795 86.0h1.3M795 91.0h1.3M795 96.0h1.3M795 101.0h1.3M795 106.0h1.3M795 111.0h1.3M795 116.0h1.3M795 121.0h1.3M795 126.0h1.3M795 131.0h1.3M795 136.0h1.3M795 141.0h1.3M795 146.0h1.3M795 151.0h1.3M795 156.0h1.3M795 161.0h1.3M795 166.0h1.3M795 171.0h1.3M795 176.0h1.3M795 181.0h1.3M795 186.0h1.3M795 191.0h1.3M795 196.0h1.3M795 201.0h1.3M795 206.0h1.3M795 211.0h1.3M795 216.0h1.3M795 221.0h1.3M795 226.0h1.3M795 231.0h1.3M795 236.0h1.3M795 241.0h1.3M795 246.0h1.3M795 251.0h1.3M795 256.0h1.3M795 261.0h1.3M795 266.0h1.3M795 271.0h1.3M795 276.0h1.3M795 281.0h1.3M795 286.0h1.3M795 291.0h1.3M795 296.0h1.3M795 301.0h1.3M795 306.0h1.3M795 311.0h1.3M795 316.0h1.3M795 321.0h1.3M795 326.0h1.3M795 331.0h1.3M795 336.0h1.3M795 341.0h1.3M795 346.0h1.3M795 351.0h1.3M795 356.0h1.3M795 361.0h1.3M795 366.0h1.3M795 371.0h1.3M795 376.0h1.3M795 381.0h1.3M795 386.0h1.3M795 391.0h1.3M795 396.0h1.3M795 401.0h1.3M795 406.0h1.3M795 411.0h1.3M795 416.0h1.3M795 421.0h1.3M795 426.0h1.3M795 431.0h1.3M795 436.0h1.3M795 441.0h1.3M795 446.0h1.3M795 451.0h1.3M795 456.0h1.3M795 461.0h1.3M795 466.0h1.3M795 471.0h1.3M795 476.0h1.3M795 481.0h1.3M795 486.0h1.3M795 491.0h1.3M795 496.0h1.3M795 501.0h1.3M795 506.0h1.3M795 511.0h1.3M795 516.0h1.3M795 521.0h1.3M795 526.0h1.3M795 531.0h1.3M795 536.0h1.3M795 541.0h1.3M795 546.0h1.3M795 551.0h1.3M795 556.0h1.3M795 561.0h1.3M795 566.0h1.3M795 571.0h1.3M795 576.0h1.3M795 581.0h1.3M795 586.0h1.3M795 591.0h1.3M795 596.0h1.3M795 601.0h1.3M795 606.0h1.3M795 611.0h1.3M795 616.0h1.3M795 621.0h1.3M795 626.0h1.3M795 631.0h1.3M795 636.0h1.3M795 641.0h1.3M795 646.0h1.3M795 651.0h1.3M795 656.0h1.3M795 661.0h1.3M795 666.0h1.3M795 671.0h1.3M795 676.0h1.3M795 681.0h1.3M795 686.0h1.3M795 691.0h1.3M795 696.0h1.3M795 701.0h1.3M795 706.0h1.3M795 711.0h1.3M795 716.0h1.3M795 721.0h1.3M795 726.0h1.3" stroke="#111a40" stroke-width="1.3"/>
<text x="11.30" y="9.60" font-size="8.2" fill="#000" font-weight="bold" textLength="17.90" lengthAdjust="spacingAndGlyphs" stroke="#000" stroke-width="0.3">$HUI</text>
<text x="31.80" y="9.60" font-size="7.2" fill="#111" textLength="84.80" lengthAdjust="spacingAndGlyphs" stroke="#111" stroke-width="0.2">(Gold Bugs Index - AMEX)</text>
<text x="119.10" y="9.10" font-size="5.8" fill="#111" textLength="15.10" lengthAdjust="spacingAndGlyphs" stroke="#111" stroke-width="0.2">INDX</text>
<text x="11.00" y="17.60" font-size="6.8" fill="#000" textLength="34.00" lengthAdjust="spacingAndGlyphs" stroke="#000" stroke-width="0.2">2-Oct-2009</text>
<text x="735.80" y="10.00" font-size="7.2" fill="#333" textLength="59.50" lengthAdjust="spacingAndGlyphs" >©StockCharts.com</text>
<text x="541.00" y="17.50" font-size="7.2" fill="#111" font-weight="bold" textLength="18.30" lengthAdjust="spacingAndGlyphs" >Open</text>
<text x="562.00" y="17.50" font-size="6.9" fill="#111" textLength="21.00" lengthAdjust="spacingAndGlyphs" >418.65</text>
<text x="587.60" y="17.50" font-size="7.2" fill="#111" font-weight="bold" textLength="15.40" lengthAdjust="spacingAndGlyphs" >High</text>
<text x="605.40" y="17.50" font-size="6.9" fill="#111" textLength="21.20" lengthAdjust="spacingAndGlyphs" >418.65</text>
<text x="631.00" y="17.50" font-size="7.2" fill="#111" font-weight="bold" textLength="15.50" lengthAdjust="spacingAndGlyphs" >Low</text>
<text x="649.00" y="17.50" font-size="6.9" fill="#111" textLength="21.00" lengthAdjust="spacingAndGlyphs" >391.47</text>
<text x="674.60" y="17.50" font-size="7.2" fill="#111" font-weight="bold" textLength="21.00" lengthAdjust="spacingAndGlyphs" >Close</text>
<text x="697.80" y="17.50" font-size="6.9" fill="#111" textLength="22.00" lengthAdjust="spacingAndGlyphs" >394.74</text>
<text x="724.00" y="17.50" font-size="7.2" fill="#111" font-weight="bold" textLength="13.70" lengthAdjust="spacingAndGlyphs" >Chg</text>
<text x="740.00" y="17.50" font-size="6.9" fill="#111" textLength="48.00" lengthAdjust="spacingAndGlyphs" >-23.91 (-5.71%)</text>
<path d="M790 14.4H794.6L792.3 17Z" fill="#d00"/>
<rect x="12" y="20" width="94" height="7" fill="#fff"/>
<rect x="12" y="27" width="110" height="7" fill="#fff"/>
<rect x="12" y="34" width="110" height="7" fill="#fff"/>
<rect x="12" y="41" width="110" height="7" fill="#fff"/>
<rect x="12" y="48" width="49" height="7" fill="#fff"/>
<path d="M13 22.3h2.3v4h-2.3zM16.3 21.8h2.5v3.8h-2.5zM14.1 21.2v6M17.5 21v5.6" fill="#111" stroke="#111" stroke-width="0.6"/>
<text x="21.00" y="26.40" font-size="6.0" fill="#333" textLength="83.80" lengthAdjust="spacingAndGlyphs" stroke="#333" stroke-width="0.25">$HUI (Monthly) 394.74</text>
<path d="M13 31.5H18.5" stroke="#2d3a8c" stroke-width="1.3"/>
<text x="19.90" y="33.70" font-size="6.0" fill="#2d3a8c" textLength="101.30" lengthAdjust="spacingAndGlyphs" stroke="#2d3a8c" stroke-width="0.3">BB(21,2.0) 216.17 - 356.48 - 496.78</text>
<path d="M13 38.4H18.5" stroke="#f03838" stroke-width="1.3"/>
<text x="19.90" y="40.70" font-size="6.0" fill="#f03838" textLength="101.30" lengthAdjust="spacingAndGlyphs" stroke="#f03838" stroke-width="0.3">BB(34,2.1) 231.52 - 361.10 - 490.69</text>
<path d="M13 45.5H18.5" stroke="#3a8a3a" stroke-width="1.3"/>
<text x="19.90" y="48.00" font-size="6.0" fill="#3a8a3a" textLength="101.30" lengthAdjust="spacingAndGlyphs" stroke="#3a8a3a" stroke-width="0.3">BB(55,2.5) 150.48 - 331.99 - 513.51</text>
<path d="M13 51.5h5.5v3.5h-5.5z" fill="#2d3a8c"/>
<text x="19.90" y="54.60" font-size="6.0" fill="#2d3a8c" textLength="40.60" lengthAdjust="spacingAndGlyphs" stroke="#2d3a8c" stroke-width="0.3">Volume undef</text>
<rect x="12" y="371" width="160.20000000000002" height="8" fill="#fff"/>
<path d="M13 375H18.8" stroke="#2d3a8c" stroke-width="1.4"/>
<text x="21.00" y="377.60" font-size="6.2" fill="#333" textLength="98.50" lengthAdjust="spacingAndGlyphs" stroke="#333" stroke-width="0.12">Full STO %K(21,8) %D(13)</text>
<text x="122.90" y="377.60" font-size="6.2" fill="#2d3a8c" textLength="23.00" lengthAdjust="spacingAndGlyphs" stroke="#2d3a8c" stroke-width="0.12">57.18,</text>
<text x="148.80" y="377.60" font-size="6.2" fill="#f03838" textLength="21.40" lengthAdjust="spacingAndGlyphs" stroke="#f03838" stroke-width="0.12">42.18</text>
<rect x="12" y="491" width="164.1" height="8" fill="#fff"/>
<path d="M13 495H18.8" stroke="#2d3a8c" stroke-width="1.4"/>
<text x="21.00" y="497.60" font-size="6.2" fill="#333" textLength="102.90" lengthAdjust="spacingAndGlyphs" stroke="#333" stroke-width="0.12">Full STO %K(34,13) %D(21)</text>
<text x="127.30" y="497.60" font-size="6.2" fill="#2d3a8c" textLength="23.40" lengthAdjust="spacingAndGlyphs" stroke="#2d3a8c" stroke-width="0.12">47.31,</text>
<text x="153.70" y="497.60" font-size="6.2" fill="#f03838" textLength="20.40" lengthAdjust="spacingAndGlyphs" stroke="#f03838" stroke-width="0.12">61.29</text>
<rect x="12" y="610" width="164.1" height="8" fill="#fff"/>
<path d="M13 614H18.8" stroke="#2d3a8c" stroke-width="1.4"/>
<text x="21.00" y="616.60" font-size="6.2" fill="#333" textLength="102.90" lengthAdjust="spacingAndGlyphs" stroke="#333" stroke-width="0.12">Full STO %K(55,21) %D(34)</text>
<text x="127.10" y="616.60" font-size="6.2" fill="#2d3a8c" textLength="23.60" lengthAdjust="spacingAndGlyphs" stroke="#2d3a8c" stroke-width="0.12">55.65,</text>
<text x="154.10" y="616.60" font-size="6.2" fill="#f03838" textLength="20.00" lengthAdjust="spacingAndGlyphs" stroke="#f03838" stroke-width="0.12">75.08</text>
<text x="13.10" y="368.30" font-size="6.4" fill="#333" text-anchor="middle" stroke="#333" stroke-width="0.3">A</text>
<text x="24.88" y="368.30" font-size="6.4" fill="#333" text-anchor="middle" stroke="#333" stroke-width="0.3">J</text>
<text x="36.65" y="368.30" font-size="6.4" fill="#333" text-anchor="middle" stroke="#333" stroke-width="0.3">O</text>
<text x="48.42" y="368.30" font-size="7.2" fill="#000" font-weight="bold" text-anchor="middle" stroke="#000" stroke-width="0.35">97</text>
<text x="60.20" y="368.30" font-size="6.4" fill="#333" text-anchor="middle" stroke="#333" stroke-width="0.3">A</text>
<text x="71.97" y="368.30" font-size="6.4" fill="#333" text-anchor="middle" stroke="#333" stroke-width="0.3">J</text>
<text x="83.75" y="368.30" font-size="6.4" fill="#333" text-anchor="middle" stroke="#333" stroke-width="0.3">O</text>
<text x="95.52" y="368.30" font-size="7.2" fill="#000" font-weight="bold" text-anchor="middle" stroke="#000" stroke-width="0.35">98</text>
<text x="107.30" y="368.30" font-size="6.4" fill="#333" text-anchor="middle" stroke="#333" stroke-width="0.3">A</text>
<text x="119.07" y="368.30" font-size="6.4" fill="#333" text-anchor="middle" stroke="#333" stroke-width="0.3">J</text>
<text x="130.85" y="368.30" font-size="6.4" fill="#333" text-anchor="middle" stroke="#333" stroke-width="0.3">O</text>
<text x="142.62" y="368.30" font-size="7.2" fill="#000" font-weight="bold" text-anchor="middle" stroke="#000" stroke-width="0.35">99</text>
<text x="154.40" y="368.30" font-size="6.4" fill="#333" text-anchor="middle" stroke="#333" stroke-width="0.3">A</text>
<text x="166.17" y="368.30" font-size="6.4" fill="#333" text-anchor="middle" stroke="#333" stroke-width="0.3">J</text>
<text x="177.95" y="368.30" font-size="6.4" fill="#333" text-anchor="middle" stroke="#333" stroke-width="0.3">O</text>
<text x="189.72" y="368.30" font-size="7.2" fill="#000" font-weight="bold" text-anchor="middle" stroke="#000" stroke-width="0.35">00</text>
<text x="201.50" y="368.30" font-size="6.4" fill="#333" text-anchor="middle" stroke="#333" stroke-width="0.3">A</text>
<text x="213.27" y="368.30" font-size="6.4" fill="#333" text-anchor="middle" stroke="#333" stroke-width="0.3">J</text>
<text x="225.05" y="368.30" font-size="6.4" fill="#333" text-anchor="middle" stroke="#333" stroke-width="0.3">O</text>
<text x="236.82" y="368.30" font-size="7.2" fill="#000" font-weight="bold" text-anchor="middle" stroke="#000" stroke-width="0.35">01</text>
<text x="248.60" y="368.30" font-size="6.4" fill="#333" text-anchor="middle" stroke="#333" stroke-width="0.3">A</text>
<text x="260.38" y="368.30" font-size="6.4" fill="#333" text-anchor="middle" stroke="#333" stroke-width="0.3">J</text>
<text x="272.15" y="368.30" font-size="6.4" fill="#333" text-anchor="middle" stroke="#333" stroke-width="0.3">O</text>
<text x="283.93" y="368.30" font-size="7.2" fill="#000" font-weight="bold" text-anchor="middle" stroke="#000" stroke-width="0.35">02</text>
<text x="295.70" y="368.30" font-size="6.4" fill="#333" text-anchor="middle" stroke="#333" stroke-width="0.3">A</text>
<text x="307.48" y="368.30" font-size="6.4" fill="#333" text-anchor="middle" stroke="#333" stroke-width="0.3">J</text>
<text x="319.25" y="368.30" font-size="6.4" fill="#333" text-anchor="middle" stroke="#333" stroke-width="0.3">O</text>
<text x="331.03" y="368.30" font-size="7.2" fill="#000" font-weight="bold" text-anchor="middle" stroke="#000" stroke-width="0.35">03</text>
<text x="342.80" y="368.30" font-size="6.4" fill="#333" text-anchor="middle" stroke="#333" stroke-width="0.3">A</text>
<text x="354.57" y="368.30" font-size="6.4" fill="#333" text-anchor="middle" stroke="#333" stroke-width="0.3">J</text>
<text x="366.35" y="368.30" font-size="6.4" fill="#333" text-anchor="middle" stroke="#333" stroke-width="0.3">O</text>
<text x="378.12" y="368.30" font-size="7.2" fill="#000" font-weight="bold" text-anchor="middle" stroke="#000" stroke-width="0.35">04</text>
<text x="389.90" y="368.30" font-size="6.4" fill="#333" text-anchor="middle" stroke="#333" stroke-width="0.3">A</text>
<text x="401.68" y="368.30" font-size="6.4" fill="#333" text-anchor="middle" stroke="#333" stroke-width="0.3">J</text>
<text x="413.45" y="368.30" font-size="6.4" fill="#333" text-anchor="middle" stroke="#333" stroke-width="0.3">O</text>
<text x="425.23" y="368.30" font-size="7.2" fill="#000" font-weight="bold" text-anchor="middle" stroke="#000" stroke-width="0.35">05</text>
<text x="437.00" y="368.30" font-size="6.4" fill="#333" text-anchor="middle" stroke="#333" stroke-width="0.3">A</text>
<text x="448.77" y="368.30" font-size="6.4" fill="#333" text-anchor="middle" stroke="#333" stroke-width="0.3">J</text>
<text x="460.55" y="368.30" font-size="6.4" fill="#333" text-anchor="middle" stroke="#333" stroke-width="0.3">O</text>
<text x="472.32" y="368.30" font-size="7.2" fill="#000" font-weight="bold" text-anchor="middle" stroke="#000" stroke-width="0.35">06</text>
<text x="484.10" y="368.30" font-size="6.4" fill="#333" text-anchor="middle" stroke="#333" stroke-width="0.3">A</text>
<text x="495.88" y="368.30" font-size="6.4" fill="#333" text-anchor="middle" stroke="#333" stroke-width="0.3">J</text>
<text x="507.65" y="368.30" font-size="6.4" fill="#333" text-anchor="middle" stroke="#333" stroke-width="0.3">O</text>
<text x="519.42" y="368.30" font-size="7.2" fill="#000" font-weight="bold" text-anchor="middle" stroke="#000" stroke-width="0.35">07</text>
<text x="531.20" y="368.30" font-size="6.4" fill="#333" text-anchor="middle" stroke="#333" stroke-width="0.3">A</text>
<text x="542.98" y="368.30" font-size="6.4" fill="#333" text-anchor="middle" stroke="#333" stroke-width="0.3">J</text>
<text x="554.75" y="368.30" font-size="6.4" fill="#333" text-anchor="middle" stroke="#333" stroke-width="0.3">O</text>
<text x="566.52" y="368.30" font-size="7.2" fill="#000" font-weight="bold" text-anchor="middle" stroke="#000" stroke-width="0.35">08</text>
<text x="578.30" y="368.30" font-size="6.4" fill="#333" text-anchor="middle" stroke="#333" stroke-width="0.3">A</text>
<text x="590.08" y="368.30" font-size="6.4" fill="#333" text-anchor="middle" stroke="#333" stroke-width="0.3">J</text>
<text x="601.85" y="368.30" font-size="6.4" fill="#333" text-anchor="middle" stroke="#333" stroke-width="0.3">O</text>
<text x="613.62" y="368.30" font-size="7.2" fill="#000" font-weight="bold" text-anchor="middle" stroke="#000" stroke-width="0.35">09</text>
<text x="625.40" y="368.30" font-size="6.4" fill="#333" text-anchor="middle" stroke="#333" stroke-width="0.3">A</text>
<text x="637.17" y="368.30" font-size="6.4" fill="#333" text-anchor="middle" stroke="#333" stroke-width="0.3">J</text>
<text x="648.95" y="368.30" font-size="6.4" fill="#333" text-anchor="middle" stroke="#333" stroke-width="0.3">O</text>
<text x="660.73" y="368.30" font-size="7.2" fill="#000" font-weight="bold" text-anchor="middle" stroke="#000" stroke-width="0.35">10</text>
<text x="672.50" y="368.30" font-size="6.4" fill="#333" text-anchor="middle" stroke="#333" stroke-width="0.3">A</text>
<text x="684.27" y="368.30" font-size="6.4" fill="#333" text-anchor="middle" stroke="#333" stroke-width="0.3">J</text>
<text x="696.05" y="368.30" font-size="6.4" fill="#333" text-anchor="middle" stroke="#333" stroke-width="0.3">O</text>
<text x="707.83" y="368.30" font-size="7.2" fill="#000" font-weight="bold" text-anchor="middle" stroke="#000" stroke-width="0.35">11</text>
<text x="719.60" y="368.30" font-size="6.4" fill="#333" text-anchor="middle" stroke="#333" stroke-width="0.3">A</text>
<text x="731.38" y="368.30" font-size="6.4" fill="#333" text-anchor="middle" stroke="#333" stroke-width="0.3">J</text>
<text x="743.15" y="368.30" font-size="6.4" fill="#333" text-anchor="middle" stroke="#333" stroke-width="0.3">O</text>
<text x="754.92" y="368.30" font-size="7.2" fill="#000" font-weight="bold" text-anchor="middle" stroke="#000" stroke-width="0.35">12</text>
<text x="766.70" y="368.30" font-size="6.4" fill="#333" text-anchor="middle" stroke="#333" stroke-width="0.3">A</text>
<text x="778.48" y="368.30" font-size="6.4" fill="#333" text-anchor="middle" stroke="#333" stroke-width="0.3">J</text>
<text x="790.25" y="368.30" font-size="6.4" fill="#333" text-anchor="middle" stroke="#333" stroke-width="0.3">O</text>
<text x="13.10" y="736.60" font-size="6.4" fill="#333" text-anchor="middle" stroke="#333" stroke-width="0.3">A</text>
<text x="24.88" y="736.60" font-size="6.4" fill="#333" text-anchor="middle" stroke="#333" stroke-width="0.3">J</text>
<text x="36.65" y="736.60" font-size="6.4" fill="#333" text-anchor="middle" stroke="#333" stroke-width="0.3">O</text>
<text x="48.42" y="736.60" font-size="7.2" fill="#000" font-weight="bold" text-anchor="middle" stroke="#000" stroke-width="0.35">97</text>
<text x="60.20" y="736.60" font-size="6.4" fill="#333" text-anchor="middle" stroke="#333" stroke-width="0.3">A</text>
<text x="71.97" y="736.60" font-size="6.4" fill="#333" text-anchor="middle" stroke="#333" stroke-width="0.3">J</text>
<text x="83.75" y="736.60" font-size="6.4" fill="#333" text-anchor="middle" stroke="#333" stroke-width="0.3">O</text>
<text x="95.52" y="736.60" font-size="7.2" fill="#000" font-weight="bold" text-anchor="middle" stroke="#000" stroke-width="0.35">98</text>
<text x="107.30" y="736.60" font-size="6.4" fill="#333" text-anchor="middle" stroke="#333" stroke-width="0.3">A</text>
<text x="119.07" y="736.60" font-size="6.4" fill="#333" text-anchor="middle" stroke="#333" stroke-width="0.3">J</text>
<text x="130.85" y="736.60" font-size="6.4" fill="#333" text-anchor="middle" stroke="#333" stroke-width="0.3">O</text>
<text x="142.62" y="736.60" font-size="7.2" fill="#000" font-weight="bold" text-anchor="middle" stroke="#000" stroke-width="0.35">99</text>
<text x="154.40" y="736.60" font-size="6.4" fill="#333" text-anchor="middle" stroke="#333" stroke-width="0.3">A</text>
<text x="166.17" y="736.60" font-size="6.4" fill="#333" text-anchor="middle" stroke="#333" stroke-width="0.3">J</text>
<text x="177.95" y="736.60" font-size="6.4" fill="#333" text-anchor="middle" stroke="#333" stroke-width="0.3">O</text>
<text x="189.72" y="736.60" font-size="7.2" fill="#000" font-weight="bold" text-anchor="middle" stroke="#000" stroke-width="0.35">00</text>
<text x="201.50" y="736.60" font-size="6.4" fill="#333" text-anchor="middle" stroke="#333" stroke-width="0.3">A</text>
<text x="213.27" y="736.60" font-size="6.4" fill="#333" text-anchor="middle" stroke="#333" stroke-width="0.3">J</text>
<text x="225.05" y="736.60" font-size="6.4" fill="#333" text-anchor="middle" stroke="#333" stroke-width="0.3">O</text>
<text x="236.82" y="736.60" font-size="7.2" fill="#000" font-weight="bold" text-anchor="middle" stroke="#000" stroke-width="0.35">01</text>
<text x="248.60" y="736.60" font-size="6.4" fill="#333" text-anchor="middle" stroke="#333" stroke-width="0.3">A</text>
<text x="260.38" y="736.60" font-size="6.4" fill="#333" text-anchor="middle" stroke="#333" stroke-width="0.3">J</text>
<text x="272.15" y="736.60" font-size="6.4" fill="#333" text-anchor="middle" stroke="#333" stroke-width="0.3">O</text>
<text x="283.93" y="736.60" font-size="7.2" fill="#000" font-weight="bold" text-anchor="middle" stroke="#000" stroke-width="0.35">02</text>
<text x="295.70" y="736.60" font-size="6.4" fill="#333" text-anchor="middle" stroke="#333" stroke-width="0.3">A</text>
<text x="307.48" y="736.60" font-size="6.4" fill="#333" text-anchor="middle" stroke="#333" stroke-width="0.3">J</text>
<text x="319.25" y="736.60" font-size="6.4" fill="#333" text-anchor="middle" stroke="#333" stroke-width="0.3">O</text>
<text x="331.03" y="736.60" font-size="7.2" fill="#000" font-weight="bold" text-anchor="middle" stroke="#000" stroke-width="0.35">03</text>
<text x="342.80" y="736.60" font-size="6.4" fill="#333" text-anchor="middle" stroke="#333" stroke-width="0.3">A</text>
<text x="354.57" y="736.60" font-size="6.4" fill="#333" text-anchor="middle" stroke="#333" stroke-width="0.3">J</text>
<text x="366.35" y="736.60" font-size="6.4" fill="#333" text-anchor="middle" stroke="#333" stroke-width="0.3">O</text>
<text x="378.12" y="736.60" font-size="7.2" fill="#000" font-weight="bold" text-anchor="middle" stroke="#000" stroke-width="0.35">04</text>
<text x="389.90" y="736.60" font-size="6.4" fill="#333" text-anchor="middle" stroke="#333" stroke-width="0.3">A</text>
<text x="401.68" y="736.60" font-size="6.4" fill="#333" text-anchor="middle" stroke="#333" stroke-width="0.3">J</text>
<text x="413.45" y="736.60" font-size="6.4" fill="#333" text-anchor="middle" stroke="#333" stroke-width="0.3">O</text>
<text x="425.23" y="736.60" font-size="7.2" fill="#000" font-weight="bold" text-anchor="middle" stroke="#000" stroke-width="0.35">05</text>
<text x="437.00" y="736.60" font-size="6.4" fill="#333" text-anchor="middle" stroke="#333" stroke-width="0.3">A</text>
<text x="448.77" y="736.60" font-size="6.4" fill="#333" text-anchor="middle" stroke="#333" stroke-width="0.3">J</text>
<text x="460.55" y="736.60" font-size="6.4" fill="#333" text-anchor="middle" stroke="#333" stroke-width="0.3">O</text>
<text x="472.32" y="736.60" font-size="7.2" fill="#000" font-weight="bold" text-anchor="middle" stroke="#000" stroke-width="0.35">06</text>
<text x="484.10" y="736.60" font-size="6.4" fill="#333" text-anchor="middle" stroke="#333" stroke-width="0.3">A</text>
<text x="495.88" y="736.60" font-size="6.4" fill="#333" text-anchor="middle" stroke="#333" stroke-width="0.3">J</text>
<text x="507.65" y="736.60" font-size="6.4" fill="#333" text-anchor="middle" stroke="#333" stroke-width="0.3">O</text>
<text x="519.42" y="736.60" font-size="7.2" fill="#000" font-weight="bold" text-anchor="middle" stroke="#000" stroke-width="0.35">07</text>
<text x="531.20" y="736.60" font-size="6.4" fill="#333" text-anchor="middle" stroke="#333" stroke-width="0.3">A</text>
<text x="542.98" y="736.60" font-size="6.4" fill="#333" text-anchor="middle" stroke="#333" stroke-width="0.3">J</text>
<text x="554.75" y="736.60" font-size="6.4" fill="#333" text-anchor="middle" stroke="#333" stroke-width="0.3">O</text>
<text x="566.52" y="736.60" font-size="7.2" fill="#000" font-weight="bold" text-anchor="middle" stroke="#000" stroke-width="0.35">08</text>
<text x="578.30" y="736.60" font-size="6.4" fill="#333" text-anchor="middle" stroke="#333" stroke-width="0.3">A</text>
<text x="590.08" y="736.60" font-size="6.4" fill="#333" text-anchor="middle" stroke="#333" stroke-width="0.3">J</text>
<text x="601.85" y="736.60" font-size="6.4" fill="#333" text-anchor="middle" stroke="#333" stroke-width="0.3">O</text>
<text x="613.62" y="736.60" font-size="7.2" fill="#000" font-weight="bold" text-anchor="middle" stroke="#000" stroke-width="0.35">09</text>
<text x="625.40" y="736.60" font-size="6.4" fill="#333" text-anchor="middle" stroke="#333" stroke-width="0.3">A</text>
<text x="637.17" y="736.60" font-size="6.4" fill="#333" text-anchor="middle" stroke="#333" stroke-width="0.3">J</text>
<text x="648.95" y="736.60" font-size="6.4" fill="#333" text-anchor="middle" stroke="#333" stroke-width="0.3">O</text>
<text x="660.73" y="736.60" font-size="7.2" fill="#000" font-weight="bold" text-anchor="middle" stroke="#000" stroke-width="0.35">10</text>
<text x="672.50" y="736.60" font-size="6.4" fill="#333" text-anchor="middle" stroke="#333" stroke-width="0.3">A</text>
<text x="684.27" y="736.60" font-size="6.4" fill="#333" text-anchor="middle" stroke="#333" stroke-width="0.3">J</text>
<text x="696.05" y="736.60" font-size="6.4" fill="#333" text-anchor="middle" stroke="#333" stroke-width="0.3">O</text>
<text x="707.83" y="736.60" font-size="7.2" fill="#000" font-weight="bold" text-anchor="middle" stroke="#000" stroke-width="0.35">11</text>
<text x="719.60" y="736.60" font-size="6.4" fill="#333" text-anchor="middle" stroke="#333" stroke-width="0.3">A</text>
<text x="731.38" y="736.60" font-size="6.4" fill="#333" text-anchor="middle" stroke="#333" stroke-width="0.3">J</text>
<text x="743.15" y="736.60" font-size="6.4" fill="#333" text-anchor="middle" stroke="#333" stroke-width="0.3">O</text>
<text x="754.92" y="736.60" font-size="7.2" fill="#000" font-weight="bold" text-anchor="middle" stroke="#000" stroke-width="0.35">12</text>
<text x="766.70" y="736.60" font-size="6.4" fill="#333" text-anchor="middle" stroke="#333" stroke-width="0.3">A</text>
<text x="778.48" y="736.60" font-size="6.4" fill="#333" text-anchor="middle" stroke="#333" stroke-width="0.3">J</text>
<text x="790.25" y="736.60" font-size="6.4" fill="#333" text-anchor="middle" stroke="#333" stroke-width="0.3">O</text>
<text x="797.60" y="342.84" font-size="6.7" fill="#111" textLength="7.40" lengthAdjust="spacingAndGlyphs" stroke="#111" stroke-width="0.25">40</text>
<text x="797.60" y="292.80" font-size="6.7" fill="#111" textLength="7.40" lengthAdjust="spacingAndGlyphs" stroke="#111" stroke-width="0.25">60</text>
<text x="797.60" y="257.30" font-size="6.7" fill="#111" textLength="7.40" lengthAdjust="spacingAndGlyphs" stroke="#111" stroke-width="0.25">80</text>
<text x="797.60" y="229.77" font-size="6.7" fill="#111" textLength="11.20" lengthAdjust="spacingAndGlyphs" stroke="#111" stroke-width="0.25">100</text>
<text x="797.60" y="207.27" font-size="6.7" fill="#111" textLength="11.20" lengthAdjust="spacingAndGlyphs" stroke="#111" stroke-width="0.25">120</text>
<text x="797.60" y="188.24" font-size="6.7" fill="#111" textLength="11.20" lengthAdjust="spacingAndGlyphs" stroke="#111" stroke-width="0.25">140</text>
<text x="797.60" y="171.77" font-size="6.7" fill="#111" textLength="11.20" lengthAdjust="spacingAndGlyphs" stroke="#111" stroke-width="0.25">160</text>
<text x="797.60" y="157.23" font-size="6.7" fill="#111" textLength="11.20" lengthAdjust="spacingAndGlyphs" stroke="#111" stroke-width="0.25">180</text>
<text x="797.60" y="144.23" font-size="6.7" fill="#111" textLength="11.20" lengthAdjust="spacingAndGlyphs" stroke="#111" stroke-width="0.25">200</text>
<text x="797.60" y="132.47" font-size="6.7" fill="#111" textLength="11.20" lengthAdjust="spacingAndGlyphs" stroke="#111" stroke-width="0.25">220</text>
<text x="797.60" y="121.73" font-size="6.7" fill="#111" textLength="11.20" lengthAdjust="spacingAndGlyphs" stroke="#111" stroke-width="0.25">240</text>
<text x="797.60" y="111.86" font-size="6.7" fill="#111" textLength="11.20" lengthAdjust="spacingAndGlyphs" stroke="#111" stroke-width="0.25">260</text>
<text x="797.60" y="102.71" font-size="6.7" fill="#111" textLength="11.20" lengthAdjust="spacingAndGlyphs" stroke="#111" stroke-width="0.25">280</text>
<text x="797.60" y="94.20" font-size="6.7" fill="#111" textLength="11.20" lengthAdjust="spacingAndGlyphs" stroke="#111" stroke-width="0.25">300</text>
<text x="797.60" y="86.23" font-size="6.7" fill="#111" textLength="11.20" lengthAdjust="spacingAndGlyphs" stroke="#111" stroke-width="0.25">320</text>
<text x="797.60" y="78.75" font-size="6.7" fill="#111" textLength="11.20" lengthAdjust="spacingAndGlyphs" stroke="#111" stroke-width="0.25">340</text>
<text x="797.60" y="71.70" font-size="6.7" fill="#111" textLength="11.20" lengthAdjust="spacingAndGlyphs" stroke="#111" stroke-width="0.25">360</text>
<text x="797.60" y="65.03" font-size="6.7" fill="#111" textLength="11.20" lengthAdjust="spacingAndGlyphs" stroke="#111" stroke-width="0.25">380</text>
<text x="797.60" y="52.68" font-size="6.7" fill="#111" textLength="11.20" lengthAdjust="spacingAndGlyphs" stroke="#111" stroke-width="0.25">420</text>
<text x="797.60" y="46.94" font-size="6.7" fill="#111" textLength="11.20" lengthAdjust="spacingAndGlyphs" stroke="#111" stroke-width="0.25">440</text>
<text x="797.60" y="41.45" font-size="6.7" fill="#111" textLength="11.20" lengthAdjust="spacingAndGlyphs" stroke="#111" stroke-width="0.25">460</text>
<text x="797.60" y="31.16" font-size="6.7" fill="#111" textLength="11.20" lengthAdjust="spacingAndGlyphs" stroke="#111" stroke-width="0.25">500</text>
<text x="797.60" y="26.32" font-size="6.7" fill="#111" textLength="11.20" lengthAdjust="spacingAndGlyphs" stroke="#111" stroke-width="0.25">520</text>
<text x="797.40" y="399.65" font-size="6.7" fill="#111" textLength="7.40" lengthAdjust="spacingAndGlyphs" stroke="#111" stroke-width="0.25">80</text>
<text x="797.40" y="432.65" font-size="6.7" fill="#111" textLength="7.40" lengthAdjust="spacingAndGlyphs" stroke="#111" stroke-width="0.25">50</text>
<text x="797.40" y="465.65" font-size="6.7" fill="#111" textLength="7.40" lengthAdjust="spacingAndGlyphs" stroke="#111" stroke-width="0.25">20</text>
<text x="797.40" y="518.85" font-size="6.7" fill="#111" textLength="7.40" lengthAdjust="spacingAndGlyphs" stroke="#111" stroke-width="0.25">80</text>
<text x="797.40" y="551.85" font-size="6.7" fill="#111" textLength="7.40" lengthAdjust="spacingAndGlyphs" stroke="#111" stroke-width="0.25">50</text>
<text x="797.40" y="584.85" font-size="6.7" fill="#111" textLength="7.40" lengthAdjust="spacingAndGlyphs" stroke="#111" stroke-width="0.25">20</text>
<text x="797.40" y="638.65" font-size="6.7" fill="#111" textLength="7.40" lengthAdjust="spacingAndGlyphs" stroke="#111" stroke-width="0.25">80</text>
<text x="797.40" y="671.65" font-size="6.7" fill="#111" textLength="7.40" lengthAdjust="spacingAndGlyphs" stroke="#111" stroke-width="0.25">50</text>
<text x="797.40" y="704.65" font-size="6.7" fill="#111" textLength="7.40" lengthAdjust="spacingAndGlyphs" stroke="#111" stroke-width="0.25">20</text>
<path d="M796 22.12H818.5V28.72H796L793.2 25.42Z" fill="#fff" stroke="#3a8a3a" stroke-width="1"/>
<text x="796.90" y="27.82" font-size="6.6" fill="#222" textLength="20.50" lengthAdjust="spacingAndGlyphs" >513.51</text>
<path d="M796 27.73H818.5V34.33H796L793.2 31.03Z" fill="#fff" stroke="#f03838" stroke-width="1"/>
<text x="796.90" y="33.43" font-size="6.6" fill="#222" textLength="20.50" lengthAdjust="spacingAndGlyphs" >490.69</text>
<path d="M796 26.21H818.5V32.81H796L793.2 29.51Z" fill="#fff" stroke="#2d3a8c" stroke-width="1"/>
<text x="796.90" y="31.91" font-size="6.6" fill="#222" textLength="20.50" lengthAdjust="spacingAndGlyphs" >496.78</text>
<path d="M796 54.58H818.5V61.18H796L793.2 57.88Z" fill="#fff" stroke="#111" stroke-width="1"/>
<text x="796.70" y="60.48" font-size="7.2" fill="#000" font-weight="bold" textLength="21.00" lengthAdjust="spacingAndGlyphs" >394.74</text>
<path d="M796 75.94H818.5V82.54H796L793.2 79.24Z" fill="#fff" stroke="#3a8a3a" stroke-width="1"/>
<text x="796.90" y="81.64" font-size="6.6" fill="#222" textLength="20.50" lengthAdjust="spacingAndGlyphs" >331.99</text>
<path d="M796 65.57H818.5V72.17H796L793.2 68.87Z" fill="#fff" stroke="#f03838" stroke-width="1"/>
<text x="796.90" y="71.27" font-size="6.6" fill="#222" textLength="20.50" lengthAdjust="spacingAndGlyphs" >361.10</text>
<path d="M796 67.16H818.5V73.76H796L793.2 70.46Z" fill="#fff" stroke="#2d3a8c" stroke-width="1"/>
<text x="796.90" y="72.86" font-size="6.6" fill="#222" textLength="20.50" lengthAdjust="spacingAndGlyphs" >356.48</text>
<path d="M796 120.42H818.5V127.02H796L793.2 123.72Z" fill="#fff" stroke="#f03838" stroke-width="1"/>
<text x="796.90" y="126.12" font-size="6.6" fill="#222" textLength="20.50" lengthAdjust="spacingAndGlyphs" >231.52</text>
<path d="M796 128.89H818.5V135.49H796L793.2 132.19Z" fill="#fff" stroke="#2d3a8c" stroke-width="1"/>
<text x="796.90" y="134.59" font-size="6.6" fill="#222" textLength="20.50" lengthAdjust="spacingAndGlyphs" >216.17</text>
<path d="M796 173.59H818.5V180.19H796L793.2 176.89Z" fill="#fff" stroke="#3a8a3a" stroke-width="1"/>
<text x="796.90" y="179.29" font-size="6.6" fill="#222" textLength="20.50" lengthAdjust="spacingAndGlyphs" >150.48</text>
<path d="M796 419.00H815.5V425.60H796L793.2 422.30Z" fill="#fff" stroke="#2d3a8c" stroke-width="1"/>
<text x="796.90" y="424.70" font-size="6.6" fill="#222" textLength="17.50" lengthAdjust="spacingAndGlyphs" >57.18</text>
<path d="M796 435.50H815.5V442.10H796L793.2 438.80Z" fill="#fff" stroke="#f03838" stroke-width="1"/>
<text x="796.90" y="441.20" font-size="6.6" fill="#222" textLength="17.50" lengthAdjust="spacingAndGlyphs" >42.18</text>
<path d="M796 549.06H815.5V555.66H796L793.2 552.36Z" fill="#fff" stroke="#2d3a8c" stroke-width="1"/>
<text x="796.90" y="554.76" font-size="6.6" fill="#222" textLength="17.50" lengthAdjust="spacingAndGlyphs" >47.31</text>
<path d="M796 533.68H815.5V540.28H796L793.2 536.98Z" fill="#fff" stroke="#f03838" stroke-width="1"/>
<text x="796.90" y="539.38" font-size="6.6" fill="#222" textLength="17.50" lengthAdjust="spacingAndGlyphs" >61.29</text>
<path d="M796 659.69H815.5V666.28H796L793.2 662.99Z" fill="#fff" stroke="#2d3a8c" stroke-width="1"/>
<text x="796.90" y="665.38" font-size="6.6" fill="#222" textLength="17.50" lengthAdjust="spacingAndGlyphs" >55.65</text>
<path d="M796 638.31H815.5V644.91H796L793.2 641.61Z" fill="#fff" stroke="#f03838" stroke-width="1"/>
<text x="796.90" y="644.01" font-size="6.6" fill="#222" textLength="17.50" lengthAdjust="spacingAndGlyphs" >75.08</text>
<rect x="0.5" y="0.5" width="819" height="739" fill="none" stroke="#1c2230" stroke-width="1"/>
</svg>
</body></html>
